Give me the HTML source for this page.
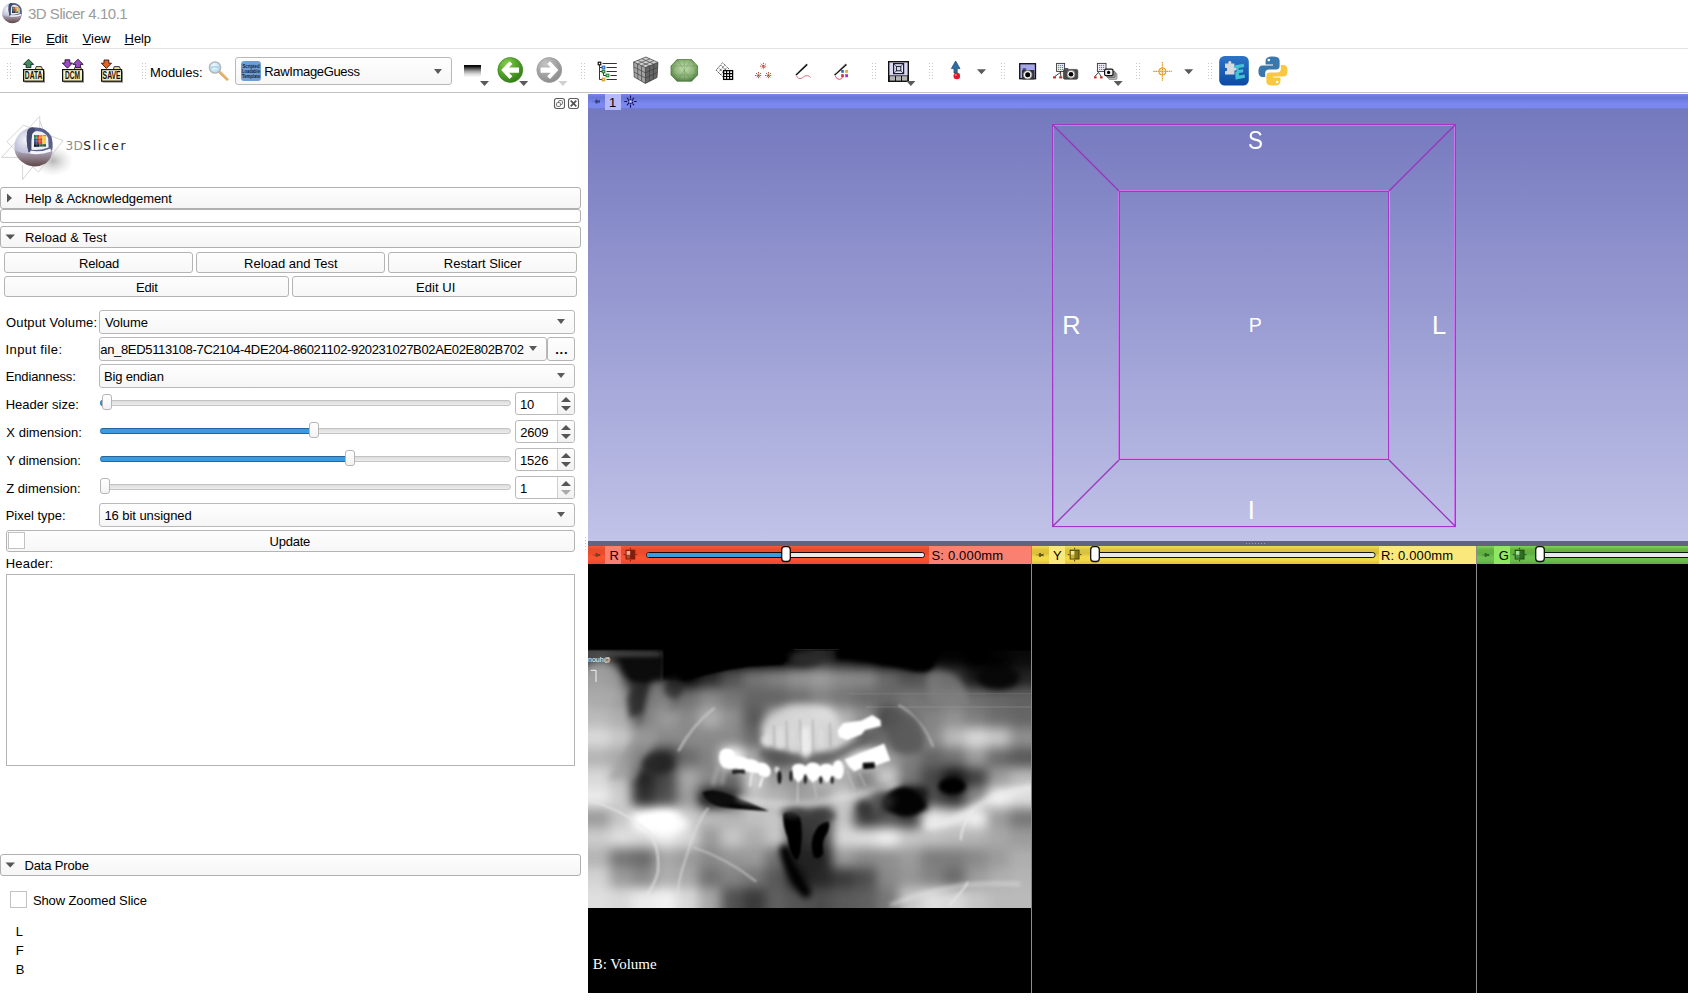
<!DOCTYPE html>
<html lang="en">
<head>
<meta charset="utf-8">
<title>3D Slicer 4.10.1</title>
<style>
html,body{margin:0;padding:0;}
body{width:1688px;height:1003px;overflow:hidden;background:#fff;position:relative;
  font-family:"Liberation Sans",sans-serif;font-size:13px;color:#000;line-height:16px;}
.a{position:absolute;white-space:nowrap;}
.hl{position:absolute;height:1px;background:#c4c4c4;}
.btn{position:absolute;box-sizing:border-box;border:1px solid #b4b4b4;border-radius:3px;
  background:linear-gradient(#fdfdfd,#f7f7f7);text-align:center;line-height:20px;}
.cb{position:absolute;box-sizing:border-box;border:1px solid #b9b9b9;border-radius:3px;
  background:linear-gradient(#fefefe,#f6f6f6);line-height:21px;padding-left:4px;}
.cb i,.dd{position:absolute;width:0;height:0;border-left:4.5px solid transparent;border-right:4.5px solid transparent;border-top:5px solid #5a5a5a;}
.col{position:absolute;box-sizing:border-box;border:1px solid #b0b0b0;border-radius:3px;
  background:linear-gradient(#fefefe,#f5f5f5);line-height:20px;}
.col span{position:absolute;left:24px;top:0;}
.sp{position:absolute;box-sizing:border-box;border:1px solid #b9b9b9;border-radius:3px;background:#fff;line-height:22px;padding-left:5px;}
.sp b{position:absolute;right:0;top:0;width:16px;height:21px;border-left:1px solid #cfcfcf;background:linear-gradient(#fcfcfc,#f2f2f2);border-radius:0 2px 2px 0;}
.sp b:before{content:"";position:absolute;left:3px;top:4px;border-left:5px solid transparent;border-right:5px solid transparent;border-bottom:5px solid #555;}
.sp b:after{content:"";position:absolute;left:3px;top:13px;border-left:5px solid transparent;border-right:5px solid transparent;border-top:5px solid #555;}
.sp.min b:after{border-top-color:#aaa;}
.trk{position:absolute;height:6px;box-sizing:border-box;border:1px solid #c3c3c3;border-radius:3px;background:linear-gradient(#dcdcdc,#ededed);}
.fill{position:absolute;height:6px;box-sizing:border-box;border:1px solid #23659c;border-left-color:#2f87c9;border-radius:3px;background:#3c9ade;}
.hnd{position:absolute;width:10px;height:16px;box-sizing:border-box;border:1px solid #b5b5b5;border-radius:3px;background:linear-gradient(#ffffff,#f3f3f3);}
.grip{position:absolute;width:5px;height:17px;background-image:radial-gradient(circle,#c9c9c9 0.8px,transparent 1px);background-size:3px 3px;}
.lbl{position:absolute;left:6px;white-space:nowrap;}
u{text-decoration:underline;text-underline-offset:1px;}
</style>
</head>
<body>
<!-- title bar -->
<svg class="a" style="left:0;top:0" width="26" height="26" viewBox="0 0 26 26"><use href="#sph" transform="translate(11.9 12.9) scale(0.516) translate(-33.4 -146.6)"/></svg>
<!-- menu bar -->
<div class="hl" style="left:0;top:48px;width:1688px;background:#e3e3e3;"></div>
<!-- toolbar -->
<div class="hl" style="left:0;top:92px;width:1688px;background:#c2c2c2;"></div>
<div class="grip" style="left:6px;top:62px;"></div>
<div class="grip" style="left:141px;top:62px;"></div>
<div class="grip" style="left:580px;top:62px;"></div>
<div class="grip" style="left:871px;top:62px;"></div>
<div class="grip" style="left:928px;top:62px;"></div>
<div class="grip" style="left:1000px;top:62px;"></div>
<div class="grip" style="left:1135px;top:62px;"></div>
<div class="grip" style="left:1207px;top:62px;"></div>
<div class="cb" style="left:235px;top:57px;width:217px;height:28px;line-height:26px;padding-left:28px;"><i style="right:9px;top:11px;"></i></div>
<!-- toolbar icons -->
<svg class="a" style="left:0;top:50px" width="1300" height="42" viewBox="0 50 1300 42" font-family="'Liberation Sans',sans-serif">
<defs>
  <linearGradient id="fold" x1="0" y1="0" x2="0" y2="1"><stop offset="0" stop-color="#fffbe0"/><stop offset="1" stop-color="#f3e6a4"/></linearGradient>
  <linearGradient id="gbar" x1="0" y1="0" x2="0" y2="1"><stop offset="0" stop-color="#000"/><stop offset="0.12" stop-color="#111"/><stop offset="0.3" stop-color="#555"/><stop offset="0.55" stop-color="#aaa"/><stop offset="0.8" stop-color="#e2e2e2"/><stop offset="1" stop-color="#fafafa"/></linearGradient>
  <radialGradient id="ggrn" cx="0.35" cy="0.25" r="0.9"><stop offset="0" stop-color="#86cc4a"/><stop offset="0.55" stop-color="#4c9c26"/><stop offset="1" stop-color="#2a6e14"/></radialGradient>
  <radialGradient id="ggry" cx="0.35" cy="0.25" r="0.9"><stop offset="0" stop-color="#c4c4c4"/><stop offset="0.6" stop-color="#9c9c9c"/><stop offset="1" stop-color="#848484"/></radialGradient>
  <linearGradient id="gext" x1="0" y1="0" x2="0" y2="1"><stop offset="0" stop-color="#2d74c6"/><stop offset="1" stop-color="#0b4aa6"/></linearGradient>
  <linearGradient id="gcube" x1="0" y1="0" x2="1" y2="1"><stop offset="0" stop-color="#bdbdbd"/><stop offset="1" stop-color="#3a3a3a"/></linearGradient>
  <radialGradient id="ggem" cx="0.5" cy="0.4" r="0.7"><stop offset="0" stop-color="#c4e0b0"/><stop offset="0.6" stop-color="#86ae72"/><stop offset="1" stop-color="#3d6a30"/></radialGradient>
  <radialGradient id="glens" cx="0.4" cy="0.35" r="0.7"><stop offset="0" stop-color="#f4fbff"/><stop offset="1" stop-color="#a8d8ee"/></radialGradient>
  <filter id="tsh" x="-20%" y="-20%" width="150%" height="150%"><feGaussianBlur stdDeviation="0.7"/></filter>
  <g id="folder">
    <rect x="1.6" y="12.2" width="20.4" height="11.6" fill="#555" opacity="0.55" filter="url(#tsh)"/>
    <path d="M12.3 10.5 L13.2 7.6 L18.4 7.6 L19.6 10.5 Z" fill="#eadf8e" stroke="#222" stroke-width="0.9"/>
    <rect x="0.6" y="10.6" width="20" height="11.6" fill="url(#fold)" stroke="#111" stroke-width="1.2"/>
  </g>
  <path id="dda" d="M0 0 L9 0 L4.5 5 Z"/>
</defs>
<!-- DATA -->
<g transform="translate(23 59)">
  <use href="#folder"/>
  <path d="M5.5 0.2 L10.6 5.4 L7.9 5.4 L7.9 8.6 L3.1 8.6 L3.1 5.4 L0.4 5.4 Z" fill="#3d8a5e" stroke="#10251a" stroke-width="0.9"/>
  <text x="10.6" y="20.4" font-size="10.6" font-weight="bold" text-anchor="middle" textLength="17.6" lengthAdjust="spacingAndGlyphs" fill="#111">DATA</text>
</g>
<!-- DCM -->
<g transform="translate(62 59)">
  <use href="#folder"/>
  <path d="M5.4 9.2 L0.3 4 L3 4 L3 0.8 L7.8 0.8 L7.8 4 L10.5 4 Z" fill="#9a4cc0" stroke="#2a1038" stroke-width="0.9"/>
  <path d="M16 0.2 L21.1 5.4 L18.4 5.4 L18.4 8.6 L13.6 8.6 L13.6 5.4 L10.9 5.4 Z" fill="#9a4cc0" stroke="#2a1038" stroke-width="0.9"/>
  <text x="10.6" y="20.4" font-size="10.6" font-weight="bold" text-anchor="middle" textLength="15" lengthAdjust="spacingAndGlyphs" fill="#111">DCM</text>
</g>
<!-- SAVE -->
<g transform="translate(101 59)">
  <use href="#folder"/>
  <path d="M5.4 9.4 L0.3 4.2 L3 4.2 L3 1 L7.8 1 L7.8 4.2 L10.5 4.2 Z" fill="#e0652a" stroke="#3a1404" stroke-width="0.9"/>
  <text x="10.6" y="20.4" font-size="10.6" font-weight="bold" text-anchor="middle" textLength="18" lengthAdjust="spacingAndGlyphs" fill="#111">SAVE</text>
</g>
<!-- magnifier -->
<g>
  <path d="M219.5 71.8 L227.4 79.4" stroke="#e7b368" stroke-width="2.6" stroke-linecap="round"/>
  <path d="M219.5 71.8 L227.4 79.4" stroke="#c9903c" stroke-width="0.6" stroke-linecap="round" transform="translate(-0.7 0.8)"/>
  <circle cx="215" cy="67.5" r="5.6" fill="url(#glens)" stroke="#b3b7bb" stroke-width="1.5"/>
  <path d="M210.8 68 Q214 65.6 219.2 67.6" stroke="#8ec6e2" stroke-width="1.2" fill="none" opacity="0.8"/>
</g>
<!-- module icon inside combo -->
<g>
  <rect x="241" y="61" width="20" height="20" rx="3.5" fill="#79a6dc"/>
  <rect x="241" y="61" width="20" height="20" rx="3.5" fill="#5e8cc8" opacity="0.35"/>
  <g font-size="4.6" font-weight="bold" fill="#0d2140" text-anchor="middle">
    <text x="251" y="67.6" textLength="17" lengthAdjust="spacingAndGlyphs">Scripted</text>
    <text x="251" y="72.6" textLength="18" lengthAdjust="spacingAndGlyphs">Loadable</text>
    <text x="251" y="77.6" textLength="18" lengthAdjust="spacingAndGlyphs">Template</text>
  </g>
</g>
<!-- gradient bar / history -->
<rect x="464" y="65" width="17" height="12" fill="url(#gbar)"/>
<use href="#dda" x="480" y="81" fill="#5a5a5a"/>
<!-- back (green) -->
<circle cx="510.3" cy="70" r="12.4" fill="url(#ggrn)" stroke="#3a8a1c" stroke-width="0.8"/>
<path d="M501.2 70 L509.6 61.2 L512.4 64 L509 67.4 L519 67.4 L519 72.8 L509 72.8 L512.4 76.2 L509.6 79 Z" fill="#fff"/>
<use href="#dda" x="519.2" y="81" fill="#5a5a5a"/>
<!-- forward (gray) -->
<circle cx="549.3" cy="70" r="12.4" fill="url(#ggry)" stroke="#9a9a9a" stroke-width="0.8"/>
<path d="M558.4 70 L550 61.2 L547.2 64 L550.6 67.4 L540.6 67.4 L540.6 72.8 L550.6 72.8 L547.2 76.2 L550 79 Z" fill="#fff"/>
<use href="#dda" x="558.4" y="81" fill="#d0d0d0"/>
<!-- tree -->
<g fill="none" stroke="#333" stroke-width="1">
  <path d="M599.5 65 L599.5 79.5 L602 79.5 M599.5 67.5 L602 67.5 M603.5 73 L603.5 75.5 L606 75.5 M599.5 71.5 L602 71.5"/>
  <path d="M602.5 63.5 L616.8 63.5 M606.5 67.5 L616.8 67.5 M606.5 71.5 L616.8 71.5 M610.5 75.5 L616.8 75.5 M606.5 79.5 L616.8 79.5"/>
  <rect x="598.2" y="62.2" width="2.6" height="2.6" stroke="#000" stroke-width="1.1" fill="#fff"/>
  <rect x="602.2" y="66.2" width="2.6" height="2.6" stroke="#2a6cc4" stroke-width="1.1" fill="#9ec4f2"/>
  <rect x="602.2" y="70.2" width="2.6" height="2.6" stroke="#1e7a2e" stroke-width="1.1" fill="#8fd49a"/>
  <rect x="606.2" y="74.2" width="2.6" height="2.6" stroke="#1e8a2e" stroke-width="1.1" fill="#9ee0a4"/>
  <rect x="602.2" y="78.2" width="2.6" height="2.6" stroke="#d69a2a" stroke-width="1.1" fill="#f8d890"/>
</g>
<!-- cube -->
<g>
  <path d="M633.6 62 L646 57 L658 62.4 L657 77.6 L645.4 83.4 L634.2 77 Z" fill="#777" />
  <path d="M633.6 62 L646 57 L658 62.4 L645.4 67.6 Z" fill="#cfcfcf"/>
  <path d="M633.6 62 L645.4 67.6 L645.4 83.4 L634.2 77 Z" fill="#a4a4a4"/>
  <path d="M645.4 67.6 L658 62.4 L657 77.6 L645.4 83.4 Z" fill="#666"/>
  <g stroke="#3a3a3a" stroke-width="0.8" fill="none" opacity="0.8">
    <path d="M633.6 62 L646 57 L658 62.4 L657 77.6 L645.4 83.4 L634.2 77 Z M633.6 62 L645.4 67.6 L658 62.4 M645.4 67.6 L645.4 83.4"/>
    <path d="M637.6 60.4 L649.6 65.8 L649.4 81.4 M641.8 58.7 L653.8 64.1 L653.2 79.5 M637.5 63.9 L637.9 79.1 M641.4 65.7 L641.7 81.3 M633.8 67 L645.4 72.8 L657.6 67.4 M634 72 L645.4 78 L657.3 72.6 M641.6 65.8 L654 60.6 M637.6 63.9 L650 58.8"/>
  </g>
</g>
<!-- gem -->
<g>
  <path d="M677 59.6 L691.6 59.6 L697.6 66 L697.6 75 L691.6 81.2 L677 81.2 L671 75 L671 66 Z" fill="url(#ggem)" stroke="#4c7a3c" stroke-width="0.8"/>
  <path d="M671 66 L697.6 66 M671 75 L697.6 75 M677 59.6 L691.6 81.2 M691.6 59.6 L677 81.2 M684.3 59.6 L684.3 81.2 M677 59.6 L671 75 M691.6 59.6 L697.6 75 M671 66 L677 81.2 M697.6 66 L691.6 81.2" stroke="#5c8a4a" stroke-width="0.5" fill="none" opacity="0.7"/>
</g>
<!-- grid / transforms -->
<g fill="none" stroke="#000">
  <path d="M716.2 70.2 L722.6 62.6 L729 69 M718.4 72.6 L725 65 M720.6 74.8 L727 67.2 M718.4 67.6 L724.8 74 M720.6 65 L727 71.4 M716.2 70.2 L722.6 76.6" stroke-width="0.8" stroke-dasharray="1 1"/>
  <rect x="723.6" y="70.6" width="9" height="8.8" stroke-width="1.3" fill="#fff"/>
  <path d="M726.6 70.6 L726.6 79.4 M729.6 70.6 L729.6 79.4 M723.6 73.6 L732.6 73.6 M723.6 76.5 L732.6 76.5" stroke-width="1.2"/>
</g>
<!-- fiducials -->
<g stroke="#b4301c" stroke-width="0.9" stroke-dasharray="1.4 0.8" fill="none">
  <g id="ast"><path d="M763.4 62.8 L763.4 69.6 M760 66.2 L766.8 66.2 M761 63.8 L765.8 68.6 M765.8 63.8 L761 68.6"/></g>
  <use href="#ast" x="-4.9" y="9.3"/>
  <use href="#ast" x="5.1" y="9.3"/>
</g>
<!-- ruler -->
<g fill="none">
  <path d="M796 75 L807.2 64.4" stroke="#111" stroke-width="1.6"/>
  <path d="M796.4 73.4 L806.4 63.8" stroke="#b0b0b0" stroke-width="1"/>
  <path d="M796 75.6 Q798.6 80 801.6 78.4 Q805 75 807.6 75.6 Q809.6 76 810.6 77.6" stroke="#c4506a" stroke-width="0.8"/>
</g>
<!-- paint -->
<g fill="none">
  <rect x="841.2" y="70" width="2.6" height="2.8" fill="#2a6cc0"/>
  <rect x="845.2" y="70" width="2.8" height="2.8" fill="#e6b030"/>
  <rect x="841.2" y="74.2" width="2.6" height="3" fill="#d8283c"/>
  <rect x="845.2" y="74.2" width="2.8" height="3" fill="#b030c8"/>
  <path d="M834.6 75 L846.4 64.4" stroke="#111" stroke-width="1.6"/>
  <path d="M835.4 73.4 L845.6 63.8" stroke="#b8b8b8" stroke-width="1"/>
  <path d="M835 75.6 Q836.6 79.6 839.6 79.4 Q842 79 842.6 77" stroke="#d03040" stroke-width="0.8"/>
</g>
<!-- layout -->
<g>
  <rect x="888.7" y="61.7" width="19.6" height="19.6" fill="#d9d9f6" stroke="#111" stroke-width="1.4"/>
  <rect x="888.7" y="75.4" width="19.6" height="5.9" fill="#111"/>
  <rect x="889.8" y="76.2" width="5.2" height="4.4" fill="#b4b4b4"/>
  <rect x="896" y="76.2" width="5" height="4.4" fill="#b4b4b4"/>
  <rect x="902" y="76.2" width="5.2" height="4.4" fill="#b4b4b4"/>
  <rect x="893.6" y="63.6" width="10" height="10" fill="#e4e4fa" stroke="#1a1a2a" stroke-width="1.2"/>
  <rect x="896.4" y="66.4" width="4.4" height="4.4" fill="#d4d4f4" stroke="#1a1a2a" stroke-width="1"/>
  <path d="M893.6 63.6 L896.4 66.4 M903.6 63.6 L900.8 66.4 M893.6 73.6 L896.4 70.8 M903.6 73.6 L900.8 70.8" stroke="#1a1a2a" stroke-width="0.7"/>
  <use href="#dda" x="906.4" y="81" fill="#5a5a5a"/>
</g>
<!-- mouse mode -->
<g>
  <path d="M955.6 61 L960 68.6 L957.2 68.6 L957.2 73 L954 73 L954 68.6 L951.4 68.6 Z" fill="#2f6ea4" stroke="#1a4468" stroke-width="0.7"/>
  <circle cx="956.8" cy="76" r="3.3" fill="#e0182c"/>
  <circle cx="955.8" cy="75" r="1.1" fill="#f47a84"/>
  <use href="#dda" x="977" y="69.2" fill="#5a5a5a"/>
</g>
<!-- screenshot -->
<g id="cam1">
  <rect x="1019.7" y="63.7" width="15.8" height="15" fill="#a6a6ea" stroke="#111" stroke-width="1.3"/>
  <rect x="1022" y="70" width="12.4" height="9.6" rx="1" fill="#333"/>
  <rect x="1022.6" y="68.4" width="3.6" height="1.4" fill="#26366e"/>
  <circle cx="1027.7" cy="74.8" r="4.3" fill="#f2f2f2" stroke="#888" stroke-width="0.8"/>
  <circle cx="1027.7" cy="74.8" r="2.5" fill="#000"/>
</g>
<!-- scene view -->
<g>
  <rect x="1056.6" y="63.4" width="8" height="8" fill="#f4f4f8" stroke="#333" stroke-width="0.9"/>
  <path d="M1058 65.4 L1063.4 65.4 M1058 67.4 L1063.4 67.4 M1058 69.4 L1063.4 69.4" stroke="#4858b0" stroke-width="0.9" stroke-dasharray="1.2 0.8"/>
  <path d="M1060.6 71.4 L1060.6 72.6 M1060.6 72.4 L1054.6 76.6 M1060.6 72.4 L1060.8 76.6" stroke="#111" stroke-width="0.8" fill="none"/>
  <rect x="1053" y="76.4" width="3" height="2" fill="#c42a20"/>
  <rect x="1059.2" y="76.4" width="3" height="2" fill="#c42a20"/>
  <rect x="1063.4" y="69.4" width="14.4" height="9.8" rx="1.4" fill="#4a4a4a" stroke="#2a2a2a" stroke-width="0.6"/>
  <rect x="1064.6" y="68" width="3.6" height="1.6" fill="#555"/>
  <circle cx="1071" cy="74.2" r="4" fill="#f2f2f2" stroke="#777" stroke-width="0.8"/>
  <circle cx="1071" cy="74.2" r="2.3" fill="#000"/>
</g>
<!-- scene views list -->
<g>
  <rect x="1097.4" y="63.4" width="8.6" height="8" fill="#f4f4f8" stroke="#333" stroke-width="0.9"/>
  <path d="M1099 65.4 L1104.6 65.4 M1099 67.4 L1104.6 67.4 M1099 69.4 L1104.6 69.4" stroke="#4858b0" stroke-width="0.9" stroke-dasharray="1.2 0.8"/>
  <path d="M1098.4 72.4 L1094.8 76.6 M1098.4 72.4 L1101.4 76.6" stroke="#111" stroke-width="0.8" fill="none"/>
  <rect x="1094" y="76.4" width="2.6" height="2" fill="#c42a20"/>
  <rect x="1100" y="76.4" width="2.6" height="2" fill="#c42a20"/>
  <rect x="1108.6" y="73" width="8.4" height="6.4" rx="1.2" fill="#c4c4c4" stroke="#777" stroke-width="0.7"/>
  <rect x="1106.8" y="71.2" width="8.4" height="6.4" rx="1.2" fill="#9a9a9a" stroke="#555" stroke-width="0.7"/>
  <rect x="1104.6" y="69.2" width="8.4" height="6.4" rx="1.4" fill="#f0f0f0" stroke="#111" stroke-width="1.2"/>
  <circle cx="1108.6" cy="72.4" r="1.6" fill="#000"/>
  <use href="#dda" x="1113.6" y="81" fill="#5a5a5a"/>
</g>
<!-- crosshair -->
<g stroke="#e59a22" fill="none">
  <path d="M1153.2 71.4 L1171.8 71.4 M1162.4 62 L1162.4 80.8" stroke-width="1.2" stroke-dasharray="1.6 0.6"/>
  <circle cx="1162.4" cy="71.4" r="3.4" stroke-width="1.1"/>
  <path d="M1160 69 L1164.8 73.8 M1164.8 69 L1160 73.8" stroke-width="0.6" opacity="0.7"/>
  <use href="#dda" x="1184.2" y="69.2" fill="#5a5a5a" stroke="none"/>
</g>
<!-- extension manager -->
<g>
  <rect x="1219.2" y="56" width="29.6" height="29.6" rx="5.5" fill="url(#gext)"/>
  <path d="M1225 63.6 L1228.4 63.6 Q1227.8 61 1229.8 61 Q1231.8 61 1231.2 63.6 L1234.4 63.6 L1234.4 67.6 Q1236.8 67 1236.8 69 Q1236.8 71 1234.4 70.4 L1234.4 74.6 L1225 74.6 L1225 71 Q1227.2 71.6 1227.2 69.4 Q1227.2 67.4 1225 68 Z" fill="#d6d9de"/>
  <path d="M1234 65.6 L1243.8 63.8 L1244.2 67 L1238.6 68 L1238.8 70 L1243 69.2 L1243.4 72.2 L1239 73 L1239.2 75.6 L1244.6 74.6 L1245 77.8 L1235.6 79.6 L1235.2 72 Q1237.4 71.6 1237.2 69.4 Q1237 67.6 1234.4 68 Z" fill="#45c2d2"/>
</g>
<!-- python -->
<g>
  <path d="M1272.6 56.4 Q1265.6 56.4 1265.6 60.6 L1265.6 64.4 L1273 64.4 L1273 65.4 L1262.6 65.4 Q1258.4 65.4 1258.4 71.2 Q1258.4 77 1262.6 77 L1265.2 77 L1265.2 73 Q1265.2 69.4 1269.2 69.4 L1276.2 69.4 Q1279.6 69.4 1279.6 66 L1279.6 60.6 Q1279.6 56.4 1272.6 56.4 Z" fill="#3a78ac"/>
  <circle cx="1268.8" cy="60" r="1.3" fill="#fff"/>
  <path d="M1273.4 85.6 Q1280.4 85.6 1280.4 81.4 L1280.4 77.6 L1273 77.6 L1273 76.6 L1283.4 76.6 Q1287.6 76.6 1287.6 70.8 Q1287.6 65 1283.4 65 L1280.8 65 L1280.8 69 Q1280.8 72.6 1276.8 72.6 L1269.8 72.6 Q1266.4 72.6 1266.4 76 L1266.4 81.4 Q1266.4 85.6 1273.4 85.6 Z" fill="#f8c840"/>
  <circle cx="1277.2" cy="82" r="1.3" fill="#fff"/>
</g>
</svg>
<!-- dock title buttons -->
<svg class="a" style="left:550px;top:96px" width="32" height="16" viewBox="550 96 32 16">
  <rect x="554.5" y="98.5" width="10" height="10" rx="2.2" fill="#fff" stroke="#5a5a5a" stroke-width="1.1"/>
  <rect x="558.6" y="100.6" width="3.8" height="3.8" rx="0.8" fill="#fff" stroke="#666" stroke-width="1"/>
  <rect x="556.6" y="102.6" width="3.8" height="3.8" rx="0.8" fill="#fff" stroke="#666" stroke-width="1"/>
  <rect x="568.5" y="98.5" width="10" height="10" rx="2.2" fill="#fff" stroke="#5a5a5a" stroke-width="1.1"/>
  <path d="M570.7 100.7 L576.3 106.3 M576.3 100.7 L570.7 106.3" stroke="#555" stroke-width="1.7" fill="none"/>
</svg>
<!-- logo -->
<svg class="a" style="left:0px;top:112px" width="140" height="72" viewBox="0 112 140 72">
  <defs>
    <radialGradient id="lg1" cx="0.3" cy="0.32" r="0.8"><stop offset="0" stop-color="#f4f5fb"/><stop offset="0.45" stop-color="#b9bcd4"/><stop offset="0.8" stop-color="#8a8098"/><stop offset="1" stop-color="#5a4448"/></radialGradient>
    <radialGradient id="lg2" cx="0.5" cy="0.5" r="0.5"><stop offset="0" stop-color="#666" stop-opacity="0.6"/><stop offset="0.6" stop-color="#999" stop-opacity="0.25"/><stop offset="1" stop-color="#aaa" stop-opacity="0"/></radialGradient>
    <linearGradient id="lg3" x1="0" y1="0" x2="0" y2="1"><stop offset="0" stop-color="#b4b2c4"/><stop offset="0.5" stop-color="#8c7c88"/><stop offset="1" stop-color="#5e4646"/></linearGradient>
  </defs>
  <ellipse cx="53" cy="161" rx="20" ry="15" fill="url(#lg2)" opacity="0.8"/>
  <g fill="none" stroke="#c4c4c8" stroke-width="0.7">
    <path d="M39.6 116.4 L1.6 157.4 L54.4 157.6 L39.8 121"/>
    <path d="M6.8 141.6 L23.4 125.2 L63 140.6 L38.4 172.2 Z"/>
    <path d="M39.8 116.4 L39.8 150 M22.6 165 L22.6 179.6 L46 150"/>
  </g>
  <g id="sph">
  <circle cx="33.4" cy="146.6" r="19" fill="url(#lg1)"/>
  <path d="M14.6 150 Q30 158 52.2 149.4 Q52.6 158 46 163.2 Q33 170.4 21.6 161.6 Q15.6 156.6 14.6 150 Z" fill="url(#lg3)"/>
  <path d="M27.4 131 Q30 126.6 34.6 127.6 Q46 127 51.6 137 Q53.4 143.6 52.2 149.4 Q42 153.4 28.6 152 Q25.6 141 27.4 131 Z" fill="#59618a"/>
  <path d="M27.4 131 Q29.6 127 33 127.4 Q35.4 128 35 131 Q32.4 141 32 151.8 L28.6 152 Q25.6 141 27.4 131 Z" fill="#444a6c"/>
  <path d="M32.2 134 Q34.4 130.6 38 131.2 Q45.6 131.6 48.2 138 L48.6 147.4 Q40 150.6 31.4 149.8 Q31 141 32.2 134 Z" fill="#eef0f6"/>
  <path d="M30.4 150.6 Q40 152.8 50.6 148.4 L51 151.6 Q40 155.4 30 153.6 Z" fill="#f4f5fa"/>
  <g>
    <rect x="34" y="135" width="12" height="11.6" fill="#2c5a3c"/>
    <rect x="34" y="135" width="3.6" height="11.6" fill="#2a4a8a"/>
    <rect x="34.2" y="135" width="4" height="4" fill="#2e8a4a"/>
    <rect x="38" y="135.6" width="4.4" height="8" fill="#e03a22"/>
    <rect x="39" y="135" width="4" height="3.4" fill="#f08a2a"/>
    <rect x="42.2" y="135.4" width="3.8" height="8.6" fill="#f2cc3a"/>
    <rect x="34" y="143.4" width="5" height="3.2" fill="#121a2a"/>
    <path d="M36.8 135 L36.8 146.6 M39.8 135 L39.8 146.6 M42.8 135 L42.8 146.6 M34 138 L46 138 M34 141 L46 141 M34 144 L46 144" stroke="#f4f4f4" stroke-width="0.4" opacity="0.7" fill="none"/>
  </g>
  </g>
  <text x="65.6" y="149.9" font-family="'DejaVu Sans','Liberation Sans',sans-serif" font-size="12.2" fill="#8e8e8e" letter-spacing="0.2">3D<tspan fill="#262626" letter-spacing="1.75">Slicer</tspan></text>
</svg>
<!-- collapsible buttons -->
<div class="col" style="left:0px;top:187px;width:581px;height:22px;"><svg class="a" style="left:5px;top:5px" width="8" height="10"><path d="M1 0.5 L6 5 L1 9.5 Z" fill="#555"/></svg></div>
<div class="col" style="left:0px;top:209px;width:581px;height:14px;background:#fff;"></div>
<div class="col" style="left:0px;top:226px;width:581px;height:22px;"><svg class="a" style="left:4px;top:7px" width="11" height="7"><path d="M0.5 0.5 L10 0.5 L5.25 5.5 Z" fill="#555"/></svg></div>
<!-- buttons -->
<div class="btn" style="left:4px;top:252px;width:189px;height:21px;"></div>
<div class="btn" style="left:196px;top:252px;width:189px;height:21px;"></div>
<div class="btn" style="left:388px;top:252px;width:189px;height:21px;"></div>
<div class="btn" style="left:4px;top:276px;width:285px;height:21px;"></div>
<div class="btn" style="left:292px;top:276px;width:285px;height:21px;"></div>
<!-- form -->
<div class="cb" style="left:99px;top:310px;width:476px;height:24px;"><i style="right:9px;top:8px;"></i></div>
<div class="cb" style="left:99px;top:337px;width:448px;height:24px;padding-left:1px;letter-spacing:-0.36px;"><i style="right:9px;top:8px;"></i></div>
<div class="btn" style="left:547px;top:337px;width:28px;height:24px;line-height:19px;"></div>
<div class="cb" style="left:99px;top:364px;width:476px;height:24px;"><i style="right:9px;top:8px;"></i></div>

<div class="trk" style="left:100px;top:400px;width:411px;"></div>
<div class="fill" style="left:100px;top:400px;width:6px;"></div>
<div class="hnd" style="left:102px;top:394px;"></div>
<div class="sp" style="left:515px;top:392px;width:60px;height:23px;"><b></b></div>

<div class="trk" style="left:100px;top:428px;width:411px;"></div>
<div class="fill" style="left:100px;top:428px;width:214px;"></div>
<div class="hnd" style="left:309px;top:422px;"></div>
<div class="sp" style="left:515px;top:420px;width:60px;height:23px;"><b></b></div>

<div class="trk" style="left:100px;top:456px;width:411px;"></div>
<div class="fill" style="left:100px;top:456px;width:250px;"></div>
<div class="hnd" style="left:345px;top:450px;"></div>
<div class="sp" style="left:515px;top:448px;width:60px;height:23px;"><b></b></div>

<div class="trk" style="left:100px;top:484px;width:411px;"></div>
<div class="hnd" style="left:100px;top:478px;"></div>
<div class="sp min" style="left:515px;top:476px;width:60px;height:23px;"><b></b></div>

<div class="cb" style="left:99px;top:503px;width:476px;height:24px;"><i style="right:9px;top:8px;"></i></div>

<div class="btn" style="left:6px;top:530px;width:569px;height:22px;"></div>
<div class="a" style="left:8px;top:532px;width:17px;height:17px;box-sizing:border-box;border:1px solid #c2c2c2;border-radius:0;background:#fff;"></div>
<div class="a" style="left:6px;top:574px;width:569px;height:192px;box-sizing:border-box;border:1px solid #b4b4b4;background:#fff;"></div>

<!-- data probe -->
<div class="col" style="left:0px;top:854px;width:581px;height:22px;"><svg class="a" style="left:4px;top:7px" width="11" height="7"><path d="M0.5 0.5 L10 0.5 L5.25 5.5 Z" fill="#555"/></svg></div>
<div class="a" style="left:10px;top:891px;width:17px;height:17px;box-sizing:border-box;border:1px solid #c2c2c2;border-radius:0;background:#fff;"></div>
<!-- splitter dots -->
<div class="a" style="left:584px;top:536px;width:3px;height:15px;background-image:radial-gradient(circle,#c4c4c4 0.7px,transparent 0.9px);background-size:3px 3px;"></div>
<!-- 3D view -->
<div class="a" style="left:588px;top:94px;width:1100px;height:15px;background:linear-gradient(#7784ea,#6976d7 24%,#7a88f1 66%,#7b87eb 90%,#6d77c9);"></div>
<div class="a" style="left:588px;top:109px;width:1100px;height:432px;background:linear-gradient(#7478be,#c1c3e8);"></div>
<div class="a" style="left:605px;top:94px;width:16px;height:16px;background:#b4bafc;"></div>
<svg class="a" style="left:588px;top:94px" width="1100" height="447" viewBox="588 94 1100 447">
  <path transform="translate(592.4 98.8)" d="M0 2.4 L2.6 2.4 L3.4 0.6 L5 0.6 L5 1.6 L7.2 1.6 L7.6 0.8 L7.6 4.6 L7.2 3.6 L5 3.6 L5 4.6 L3.4 4.6 L2.6 2.8 L0 2.8 Z" fill="#30346e" opacity="0.85"/>
  <g stroke="#14145e" stroke-width="1.1" fill="none">
    <path d="M630.5 95.4 L630.5 98.4 M630.5 104.6 L630.5 107.8 M624.2 101.5 L627.2 101.5 M633.8 101.5 L636.8 101.5"/>
    <rect x="628.5" y="99.5" width="4" height="4" stroke-dasharray="1 0.6"/>
    <path d="M627.2 98.2 L628 99 M633 99 L633.8 98.2 M627.2 104.8 L628 104 M633 104 L633.8 104.8" stroke-linecap="round"/>
  </g>
  <rect x="629.8" y="100.8" width="1.4" height="1.4" fill="#e8e8ff"/>
  <g fill="none" stroke-width="1">
    <g stroke="#cf74ee">
      <path d="M1053.5 125 L1053.5 527 M1454.5 125 L1454.5 527 M1053 125.5 L1455 125.5"/>
      <path d="M1052 527.5 L1456 527.5" stroke="#e79af6"/>
      <path d="M1118.5 190 L1118.5 459 M1118 190.5 L1389 190.5"/>
      <path d="M1389.5 191 L1389.5 460 M1119 458.5 L1389 458.5" stroke="#e08cf4"/>
    </g>
    <g stroke="#a437c6">
      <rect x="1052.5" y="124.5" width="403" height="402"/>
      <rect x="1119.5" y="191.5" width="269" height="268"/>
    </g>
    <path d="M1053 125 L1119 191 M1455 125 L1389 191 M1053 526 L1119 460 M1455 526 L1389 460" stroke="#9a32bc" stroke-width="1.3"/>
  </g>
</svg>
<div class="a" style="left:588px;top:541px;width:1100px;height:5px;background:#61637f;"></div>
<!-- slice views -->
<div class="a" style="left:588px;top:564px;width:1100px;height:429px;background:#000;"></div>
<div class="a" style="left:1031px;top:546px;width:1px;height:447px;background:#8c8c8c;"></div>
<div class="a" style="left:1476px;top:546px;width:1px;height:447px;background:#8c8c8c;"></div>
<!-- red -->
<div class="a" style="left:588px;top:546px;width:443px;height:18px;background:linear-gradient(#f25a3c,#ea4a2e 18%,#ec4a2c 40%,#f8542f 62%,#f65230 80%,#e24c34);"></div>
<div class="a" style="left:605px;top:546px;width:16px;height:18px;background:#fa8072;"></div>
<div class="a" style="left:929px;top:546px;width:102px;height:18px;background:#fa8072;"></div>
<!-- yellow -->
<div class="a" style="left:1032px;top:546px;width:444px;height:18px;background:linear-gradient(#f0dc58,#e0c640 18%,#d9bf3b 40%,#f3da48 62%,#f1d746 80%,#dcc044);"></div>
<div class="a" style="left:1049px;top:546px;width:16px;height:18px;background:#fbe87c;"></div>
<div class="a" style="left:1379px;top:546px;width:97px;height:18px;background:#fbe87c;"></div>
<!-- green -->
<div class="a" style="left:1477px;top:546px;width:211px;height:18px;background:linear-gradient(#7cd45c,#64b446 18%,#5eae42 40%,#6ec24e 62%,#6cbe4c 80%,#5ea844);"></div>
<div class="a" style="left:1494px;top:546px;width:16px;height:18px;background:#8ee864;"></div>
<svg class="a" style="left:588px;top:541px" width="1100" height="24" viewBox="588 541 1100 24">
  <defs>
    <g id="pin"><path d="M0 2.4 L2.6 2.4 L3.4 0.6 L5 0.6 L5 1.6 L7.2 1.6 L7.6 0.8 L7.6 4.6 L7.2 3.6 L5 3.6 L5 4.6 L3.4 4.6 L2.6 2.8 L0 2.8 Z"/></g>
    <g id="slic">
      <rect x="0" y="0" width="8.8" height="8.8" />
      <path d="M4.4 -2 L4.4 -1.2 M4.4 10 L4.4 10.8 M-2 4.4 L-1.2 4.4 M10 4.4 L10.8 4.4" stroke-width="1" fill="none" stroke-linecap="round"/>
    </g>
  </defs>
  <!-- splitter grip -->
  <g fill="#9a9ab4"><rect x="1246" y="543" width="1" height="1"/><rect x="1249" y="543" width="1" height="1"/><rect x="1252" y="543" width="1" height="1"/><rect x="1255" y="543" width="1" height="1"/><rect x="1258" y="543" width="1" height="1"/><rect x="1261" y="543" width="1" height="1"/><rect x="1264" y="543" width="1" height="1"/></g>
  <!-- red -->
  <use href="#pin" x="592.6" y="552.4" fill="#6a3a22" opacity="0.85"/>
  <g transform="translate(626 550.2)"><use href="#slic" fill="#7a1f0c" stroke="#8a1a08"/><rect x="0.6" y="0.8" width="3.6" height="3.8" fill="#f4a898"/><rect x="0.6" y="4.8" width="3.6" height="3.6" fill="#b04430"/></g>
  <rect x="646.5" y="552.5" width="278" height="5" rx="2.2" fill="#e9e9e9" stroke="#1a0806" stroke-width="1"/>
  <rect x="647" y="553" width="138" height="4" rx="1.8" fill="#3c9ade"/>
  <rect x="781.7" y="546.7" width="8.6" height="14.8" rx="3" fill="#fff" stroke="#1a0806" stroke-width="1.3"/>
  <!-- yellow -->
  <use href="#pin" x="1036" y="552.4" fill="#4a4418" opacity="0.85"/>
  <g transform="translate(1070.2 550.2)"><use href="#slic" fill="#8a7a10" stroke="#4a4008"/><rect x="0.6" y="0.8" width="3.6" height="3.8" fill="#f2e698"/><rect x="0.6" y="4.8" width="3.6" height="3.6" fill="#c4b040"/></g>
  <rect x="1095" y="552.5" width="280" height="5" rx="2.2" fill="#e9e9e9" stroke="#14120a" stroke-width="1"/>
  <rect x="1090.7" y="546.7" width="8.6" height="14.8" rx="3" fill="#fff" stroke="#14120a" stroke-width="1.3"/>
  <!-- green -->
  <use href="#pin" x="1481.6" y="552.4" fill="#2a5a1e" opacity="0.85"/>
  <g transform="translate(1515.2 550.2)"><use href="#slic" fill="#2e6e22" stroke="#1a4a12"/><rect x="0.6" y="0.8" width="3.6" height="3.8" fill="#a8e090"/><rect x="0.6" y="4.8" width="3.6" height="3.6" fill="#4c9438"/></g>
  <rect x="1540" y="552.5" width="160" height="5" rx="2.2" fill="#e9e9e9" stroke="#0a1406" stroke-width="1"/>
  <rect x="1535.7" y="546.7" width="8.6" height="14.8" rx="3" fill="#fff" stroke="#0a1406" stroke-width="1.3"/>
</svg>
<!-- x-ray -->
<svg class="a" style="left:588px;top:648px" width="443" height="260" viewBox="588 648 443 260">
<defs>
<filter id="xg" color-interpolation-filters="sRGB" filterUnits="userSpaceOnUse" x="540" y="600" width="540" height="360"><feGaussianBlur stdDeviation="6"/><feComponentTransfer><feFuncR type="linear" slope="1.22" intercept="-0.105"/><feFuncG type="linear" slope="1.22" intercept="-0.105"/><feFuncB type="linear" slope="1.22" intercept="-0.105"/></feComponentTransfer></filter>
<filter id="xb0" color-interpolation-filters="sRGB" filterUnits="userSpaceOnUse" x="560" y="620" width="500" height="320"><feGaussianBlur stdDeviation="0.6"/></filter>
<filter id="xb1" color-interpolation-filters="sRGB" filterUnits="userSpaceOnUse" x="560" y="620" width="500" height="320"><feGaussianBlur stdDeviation="1"/></filter>
<filter id="xb2" color-interpolation-filters="sRGB" filterUnits="userSpaceOnUse" x="560" y="620" width="500" height="320"><feGaussianBlur stdDeviation="2"/></filter>
<filter id="xb3" color-interpolation-filters="sRGB" filterUnits="userSpaceOnUse" x="560" y="620" width="500" height="320"><feGaussianBlur stdDeviation="3"/></filter>
<filter id="xb4" color-interpolation-filters="sRGB" filterUnits="userSpaceOnUse" x="560" y="620" width="500" height="320"><feGaussianBlur stdDeviation="4"/></filter>
<filter id="xb6" color-interpolation-filters="sRGB" filterUnits="userSpaceOnUse" x="560" y="620" width="500" height="320"><feGaussianBlur stdDeviation="6"/></filter>
<filter id="xb9" color-interpolation-filters="sRGB" filterUnits="userSpaceOnUse" x="560" y="620" width="500" height="320"><feGaussianBlur stdDeviation="9"/></filter>
<clipPath id="xclip"><rect x="588" y="649" width="443" height="259"/></clipPath>
</defs>
<g clip-path="url(#xclip)">
<g filter="url(#xg)">
<rect x="565.5" y="627.7" width="22.8" height="20.6" fill="#464646"/>
<rect x="587.7" y="627.7" width="22.8" height="20.6" fill="#464646"/>
<rect x="609.9" y="627.7" width="22.8" height="20.6" fill="#2d2d2d"/>
<rect x="632.1" y="627.7" width="22.8" height="20.6" fill="#232323"/>
<rect x="654.3" y="627.7" width="22.8" height="20.6" fill="#141414"/>
<rect x="676.5" y="627.7" width="22.8" height="20.6" fill="#000000"/>
<rect x="698.7" y="627.7" width="22.8" height="20.6" fill="#050505"/>
<rect x="720.9" y="627.7" width="22.8" height="20.6" fill="#000000"/>
<rect x="743.1" y="627.7" width="22.8" height="20.6" fill="#000000"/>
<rect x="765.3" y="627.7" width="22.8" height="20.6" fill="#050505"/>
<rect x="787.5" y="627.7" width="22.8" height="20.6" fill="#191919"/>
<rect x="809.7" y="627.7" width="22.8" height="20.6" fill="#373737"/>
<rect x="831.9" y="627.7" width="22.8" height="20.6" fill="#282828"/>
<rect x="854.1" y="627.7" width="22.8" height="20.6" fill="#191919"/>
<rect x="876.3" y="627.7" width="22.8" height="20.6" fill="#050505"/>
<rect x="898.5" y="627.7" width="22.8" height="20.6" fill="#0c0c0c"/>
<rect x="920.7" y="627.7" width="22.8" height="20.6" fill="#191919"/>
<rect x="942.9" y="627.7" width="22.8" height="20.6" fill="#191919"/>
<rect x="965.1" y="627.7" width="22.8" height="20.6" fill="#141414"/>
<rect x="987.3" y="627.7" width="22.8" height="20.6" fill="#191919"/>
<rect x="1009.5" y="627.7" width="22.8" height="20.6" fill="#1e1e1e"/>
<rect x="1031.7" y="627.7" width="22.8" height="20.6" fill="#1e1e1e"/>
<rect x="565.5" y="647.7" width="22.8" height="20.6" fill="#464646"/>
<rect x="587.7" y="647.7" width="22.8" height="20.6" fill="#464646"/>
<rect x="609.9" y="647.7" width="22.8" height="20.6" fill="#2d2d2d"/>
<rect x="632.1" y="647.7" width="22.8" height="20.6" fill="#232323"/>
<rect x="654.3" y="647.7" width="22.8" height="20.6" fill="#141414"/>
<rect x="676.5" y="647.7" width="22.8" height="20.6" fill="#000000"/>
<rect x="698.7" y="647.7" width="22.8" height="20.6" fill="#050505"/>
<rect x="720.9" y="647.7" width="22.8" height="20.6" fill="#000000"/>
<rect x="743.1" y="647.7" width="22.8" height="20.6" fill="#000000"/>
<rect x="765.3" y="647.7" width="22.8" height="20.6" fill="#050505"/>
<rect x="787.5" y="647.7" width="22.8" height="20.6" fill="#191919"/>
<rect x="809.7" y="647.7" width="22.8" height="20.6" fill="#373737"/>
<rect x="831.9" y="647.7" width="22.8" height="20.6" fill="#282828"/>
<rect x="854.1" y="647.7" width="22.8" height="20.6" fill="#191919"/>
<rect x="876.3" y="647.7" width="22.8" height="20.6" fill="#050505"/>
<rect x="898.5" y="647.7" width="22.8" height="20.6" fill="#0c0c0c"/>
<rect x="920.7" y="647.7" width="22.8" height="20.6" fill="#191919"/>
<rect x="942.9" y="647.7" width="22.8" height="20.6" fill="#191919"/>
<rect x="965.1" y="647.7" width="22.8" height="20.6" fill="#141414"/>
<rect x="987.3" y="647.7" width="22.8" height="20.6" fill="#191919"/>
<rect x="1009.5" y="647.7" width="22.8" height="20.6" fill="#1e1e1e"/>
<rect x="1031.7" y="647.7" width="22.8" height="20.6" fill="#1e1e1e"/>
<rect x="565.5" y="667.7" width="22.8" height="20.6" fill="#787878"/>
<rect x="587.7" y="667.7" width="22.8" height="20.6" fill="#787878"/>
<rect x="609.9" y="667.7" width="22.8" height="20.6" fill="#505050"/>
<rect x="632.1" y="667.7" width="22.8" height="20.6" fill="#232323"/>
<rect x="654.3" y="667.7" width="22.8" height="20.6" fill="#282828"/>
<rect x="676.5" y="667.7" width="22.8" height="20.6" fill="#191919"/>
<rect x="698.7" y="667.7" width="22.8" height="20.6" fill="#373737"/>
<rect x="720.9" y="667.7" width="22.8" height="20.6" fill="#5a5a5a"/>
<rect x="743.1" y="667.7" width="22.8" height="20.6" fill="#767676"/>
<rect x="765.3" y="667.7" width="22.8" height="20.6" fill="#808080"/>
<rect x="787.5" y="667.7" width="22.8" height="20.6" fill="#8e8e8e"/>
<rect x="809.7" y="667.7" width="22.8" height="20.6" fill="#969696"/>
<rect x="831.9" y="667.7" width="22.8" height="20.6" fill="#888888"/>
<rect x="854.1" y="667.7" width="22.8" height="20.6" fill="#868686"/>
<rect x="876.3" y="667.7" width="22.8" height="20.6" fill="#6c6c6c"/>
<rect x="898.5" y="667.7" width="22.8" height="20.6" fill="#585858"/>
<rect x="920.7" y="667.7" width="22.8" height="20.6" fill="#5f5f5f"/>
<rect x="942.9" y="667.7" width="22.8" height="20.6" fill="#464646"/>
<rect x="965.1" y="667.7" width="22.8" height="20.6" fill="#282828"/>
<rect x="987.3" y="667.7" width="22.8" height="20.6" fill="#191919"/>
<rect x="1009.5" y="667.7" width="22.8" height="20.6" fill="#323232"/>
<rect x="1031.7" y="667.7" width="22.8" height="20.6" fill="#323232"/>
<rect x="565.5" y="687.7" width="22.8" height="20.6" fill="#a5a5a5"/>
<rect x="587.7" y="687.7" width="22.8" height="20.6" fill="#a5a5a5"/>
<rect x="609.9" y="687.7" width="22.8" height="20.6" fill="#969696"/>
<rect x="632.1" y="687.7" width="22.8" height="20.6" fill="#555555"/>
<rect x="654.3" y="687.7" width="22.8" height="20.6" fill="#646464"/>
<rect x="676.5" y="687.7" width="22.8" height="20.6" fill="#737373"/>
<rect x="698.7" y="687.7" width="22.8" height="20.6" fill="#878787"/>
<rect x="720.9" y="687.7" width="22.8" height="20.6" fill="#787878"/>
<rect x="743.1" y="687.7" width="22.8" height="20.6" fill="#696969"/>
<rect x="765.3" y="687.7" width="22.8" height="20.6" fill="#696969"/>
<rect x="787.5" y="687.7" width="22.8" height="20.6" fill="#737373"/>
<rect x="809.7" y="687.7" width="22.8" height="20.6" fill="#828282"/>
<rect x="831.9" y="687.7" width="22.8" height="20.6" fill="#787878"/>
<rect x="854.1" y="687.7" width="22.8" height="20.6" fill="#6e6e6e"/>
<rect x="876.3" y="687.7" width="22.8" height="20.6" fill="#6c6c6c"/>
<rect x="898.5" y="687.7" width="22.8" height="20.6" fill="#767676"/>
<rect x="920.7" y="687.7" width="22.8" height="20.6" fill="#737373"/>
<rect x="942.9" y="687.7" width="22.8" height="20.6" fill="#7a7a7a"/>
<rect x="965.1" y="687.7" width="22.8" height="20.6" fill="#707070"/>
<rect x="987.3" y="687.7" width="22.8" height="20.6" fill="#6a6a6a"/>
<rect x="1009.5" y="687.7" width="22.8" height="20.6" fill="#666666"/>
<rect x="1031.7" y="687.7" width="22.8" height="20.6" fill="#666666"/>
<rect x="565.5" y="707.7" width="22.8" height="20.6" fill="#afafaf"/>
<rect x="587.7" y="707.7" width="22.8" height="20.6" fill="#afafaf"/>
<rect x="609.9" y="707.7" width="22.8" height="20.6" fill="#a5a5a5"/>
<rect x="632.1" y="707.7" width="22.8" height="20.6" fill="#646464"/>
<rect x="654.3" y="707.7" width="22.8" height="20.6" fill="#969696"/>
<rect x="676.5" y="707.7" width="22.8" height="20.6" fill="#878787"/>
<rect x="698.7" y="707.7" width="22.8" height="20.6" fill="#a5a5a5"/>
<rect x="720.9" y="707.7" width="22.8" height="20.6" fill="#8c8c8c"/>
<rect x="743.1" y="707.7" width="22.8" height="20.6" fill="#5f5f5f"/>
<rect x="765.3" y="707.7" width="22.8" height="20.6" fill="#969696"/>
<rect x="787.5" y="707.7" width="22.8" height="20.6" fill="#cdcdcd"/>
<rect x="809.7" y="707.7" width="22.8" height="20.6" fill="#e6e6e6"/>
<rect x="831.9" y="707.7" width="22.8" height="20.6" fill="#aaaaaa"/>
<rect x="854.1" y="707.7" width="22.8" height="20.6" fill="#8c8c8c"/>
<rect x="876.3" y="707.7" width="22.8" height="20.6" fill="#505050"/>
<rect x="898.5" y="707.7" width="22.8" height="20.6" fill="#787878"/>
<rect x="920.7" y="707.7" width="22.8" height="20.6" fill="#828282"/>
<rect x="942.9" y="707.7" width="22.8" height="20.6" fill="#8e8e8e"/>
<rect x="965.1" y="707.7" width="22.8" height="20.6" fill="#7e7e7e"/>
<rect x="987.3" y="707.7" width="22.8" height="20.6" fill="#707070"/>
<rect x="1009.5" y="707.7" width="22.8" height="20.6" fill="#6a6a6a"/>
<rect x="1031.7" y="707.7" width="22.8" height="20.6" fill="#6a6a6a"/>
<rect x="565.5" y="727.7" width="22.8" height="20.6" fill="#c8c8c8"/>
<rect x="587.7" y="727.7" width="22.8" height="20.6" fill="#c8c8c8"/>
<rect x="609.9" y="727.7" width="22.8" height="20.6" fill="#b9b9b9"/>
<rect x="632.1" y="727.7" width="22.8" height="20.6" fill="#969696"/>
<rect x="654.3" y="727.7" width="22.8" height="20.6" fill="#878787"/>
<rect x="676.5" y="727.7" width="22.8" height="20.6" fill="#878787"/>
<rect x="698.7" y="727.7" width="22.8" height="20.6" fill="#878787"/>
<rect x="720.9" y="727.7" width="22.8" height="20.6" fill="#878787"/>
<rect x="743.1" y="727.7" width="22.8" height="20.6" fill="#6e6e6e"/>
<rect x="765.3" y="727.7" width="22.8" height="20.6" fill="#c3c3c3"/>
<rect x="787.5" y="727.7" width="22.8" height="20.6" fill="#e1e1e1"/>
<rect x="809.7" y="727.7" width="22.8" height="20.6" fill="#d2d2d2"/>
<rect x="831.9" y="727.7" width="22.8" height="20.6" fill="#c8c8c8"/>
<rect x="854.1" y="727.7" width="22.8" height="20.6" fill="#646464"/>
<rect x="876.3" y="727.7" width="22.8" height="20.6" fill="#6e6e6e"/>
<rect x="898.5" y="727.7" width="22.8" height="20.6" fill="#787878"/>
<rect x="920.7" y="727.7" width="22.8" height="20.6" fill="#878787"/>
<rect x="942.9" y="727.7" width="22.8" height="20.6" fill="#afafaf"/>
<rect x="965.1" y="727.7" width="22.8" height="20.6" fill="#c8c8c8"/>
<rect x="987.3" y="727.7" width="22.8" height="20.6" fill="#b9b9b9"/>
<rect x="1009.5" y="727.7" width="22.8" height="20.6" fill="#8c8c8c"/>
<rect x="1031.7" y="727.7" width="22.8" height="20.6" fill="#8c8c8c"/>
<rect x="565.5" y="747.7" width="22.8" height="20.6" fill="#aaaaaa"/>
<rect x="587.7" y="747.7" width="22.8" height="20.6" fill="#aaaaaa"/>
<rect x="609.9" y="747.7" width="22.8" height="20.6" fill="#a0a0a0"/>
<rect x="632.1" y="747.7" width="22.8" height="20.6" fill="#646464"/>
<rect x="654.3" y="747.7" width="22.8" height="20.6" fill="#3c3c3c"/>
<rect x="676.5" y="747.7" width="22.8" height="20.6" fill="#6e6e6e"/>
<rect x="698.7" y="747.7" width="22.8" height="20.6" fill="#828282"/>
<rect x="720.9" y="747.7" width="22.8" height="20.6" fill="#ebebeb"/>
<rect x="743.1" y="747.7" width="22.8" height="20.6" fill="#a0a0a0"/>
<rect x="765.3" y="747.7" width="22.8" height="20.6" fill="#5f5f5f"/>
<rect x="787.5" y="747.7" width="22.8" height="20.6" fill="#828282"/>
<rect x="809.7" y="747.7" width="22.8" height="20.6" fill="#828282"/>
<rect x="831.9" y="747.7" width="22.8" height="20.6" fill="#b4b4b4"/>
<rect x="854.1" y="747.7" width="22.8" height="20.6" fill="#d2d2d2"/>
<rect x="876.3" y="747.7" width="22.8" height="20.6" fill="#969696"/>
<rect x="898.5" y="747.7" width="22.8" height="20.6" fill="#7d7d7d"/>
<rect x="920.7" y="747.7" width="22.8" height="20.6" fill="#696969"/>
<rect x="942.9" y="747.7" width="22.8" height="20.6" fill="#737373"/>
<rect x="965.1" y="747.7" width="22.8" height="20.6" fill="#969696"/>
<rect x="987.3" y="747.7" width="22.8" height="20.6" fill="#6e6e6e"/>
<rect x="1009.5" y="747.7" width="22.8" height="20.6" fill="#5f5f5f"/>
<rect x="1031.7" y="747.7" width="22.8" height="20.6" fill="#5f5f5f"/>
<rect x="565.5" y="767.7" width="22.8" height="20.6" fill="#c8c8c8"/>
<rect x="587.7" y="767.7" width="22.8" height="20.6" fill="#c8c8c8"/>
<rect x="609.9" y="767.7" width="22.8" height="20.6" fill="#b4b4b4"/>
<rect x="632.1" y="767.7" width="22.8" height="20.6" fill="#343434"/>
<rect x="654.3" y="767.7" width="22.8" height="20.6" fill="#505050"/>
<rect x="676.5" y="767.7" width="22.8" height="20.6" fill="#a0a0a0"/>
<rect x="698.7" y="767.7" width="22.8" height="20.6" fill="#878787"/>
<rect x="720.9" y="767.7" width="22.8" height="20.6" fill="#6e6e6e"/>
<rect x="743.1" y="767.7" width="22.8" height="20.6" fill="#bebebe"/>
<rect x="765.3" y="767.7" width="22.8" height="20.6" fill="#969696"/>
<rect x="787.5" y="767.7" width="22.8" height="20.6" fill="#8c8c8c"/>
<rect x="809.7" y="767.7" width="22.8" height="20.6" fill="#aaaaaa"/>
<rect x="831.9" y="767.7" width="22.8" height="20.6" fill="#a5a5a5"/>
<rect x="854.1" y="767.7" width="22.8" height="20.6" fill="#828282"/>
<rect x="876.3" y="767.7" width="22.8" height="20.6" fill="#bebebe"/>
<rect x="898.5" y="767.7" width="22.8" height="20.6" fill="#787878"/>
<rect x="920.7" y="767.7" width="22.8" height="20.6" fill="#505050"/>
<rect x="942.9" y="767.7" width="22.8" height="20.6" fill="#282828"/>
<rect x="965.1" y="767.7" width="22.8" height="20.6" fill="#4b4b4b"/>
<rect x="987.3" y="767.7" width="22.8" height="20.6" fill="#969696"/>
<rect x="1009.5" y="767.7" width="22.8" height="20.6" fill="#afafaf"/>
<rect x="1031.7" y="767.7" width="22.8" height="20.6" fill="#afafaf"/>
<rect x="565.5" y="787.7" width="22.8" height="20.6" fill="#d7d7d7"/>
<rect x="587.7" y="787.7" width="22.8" height="20.6" fill="#d7d7d7"/>
<rect x="609.9" y="787.7" width="22.8" height="20.6" fill="#bebebe"/>
<rect x="632.1" y="787.7" width="22.8" height="20.6" fill="#3e3e3e"/>
<rect x="654.3" y="787.7" width="22.8" height="20.6" fill="#585858"/>
<rect x="676.5" y="787.7" width="22.8" height="20.6" fill="#969696"/>
<rect x="698.7" y="787.7" width="22.8" height="20.6" fill="#323232"/>
<rect x="720.9" y="787.7" width="22.8" height="20.6" fill="#505050"/>
<rect x="743.1" y="787.7" width="22.8" height="20.6" fill="#b4b4b4"/>
<rect x="765.3" y="787.7" width="22.8" height="20.6" fill="#aaaaaa"/>
<rect x="787.5" y="787.7" width="22.8" height="20.6" fill="#9b9b9b"/>
<rect x="809.7" y="787.7" width="22.8" height="20.6" fill="#9b9b9b"/>
<rect x="831.9" y="787.7" width="22.8" height="20.6" fill="#bebebe"/>
<rect x="854.1" y="787.7" width="22.8" height="20.6" fill="#969696"/>
<rect x="876.3" y="787.7" width="22.8" height="20.6" fill="#5a5a5a"/>
<rect x="898.5" y="787.7" width="22.8" height="20.6" fill="#191919"/>
<rect x="920.7" y="787.7" width="22.8" height="20.6" fill="#555555"/>
<rect x="942.9" y="787.7" width="22.8" height="20.6" fill="#3c3c3c"/>
<rect x="965.1" y="787.7" width="22.8" height="20.6" fill="#8c8c8c"/>
<rect x="987.3" y="787.7" width="22.8" height="20.6" fill="#dcdcdc"/>
<rect x="1009.5" y="787.7" width="22.8" height="20.6" fill="#cdcdcd"/>
<rect x="1031.7" y="787.7" width="22.8" height="20.6" fill="#cdcdcd"/>
<rect x="565.5" y="807.7" width="22.8" height="20.6" fill="#969696"/>
<rect x="587.7" y="807.7" width="22.8" height="20.6" fill="#969696"/>
<rect x="609.9" y="807.7" width="22.8" height="20.6" fill="#b9b9b9"/>
<rect x="632.1" y="807.7" width="22.8" height="20.6" fill="#f0f0f0"/>
<rect x="654.3" y="807.7" width="22.8" height="20.6" fill="#fafafa"/>
<rect x="676.5" y="807.7" width="22.8" height="20.6" fill="#bebebe"/>
<rect x="698.7" y="807.7" width="22.8" height="20.6" fill="#afafaf"/>
<rect x="720.9" y="807.7" width="22.8" height="20.6" fill="#aaaaaa"/>
<rect x="743.1" y="807.7" width="22.8" height="20.6" fill="#b4b4b4"/>
<rect x="765.3" y="807.7" width="22.8" height="20.6" fill="#b9b9b9"/>
<rect x="787.5" y="807.7" width="22.8" height="20.6" fill="#464646"/>
<rect x="809.7" y="807.7" width="22.8" height="20.6" fill="#464646"/>
<rect x="831.9" y="807.7" width="22.8" height="20.6" fill="#b9b9b9"/>
<rect x="854.1" y="807.7" width="22.8" height="20.6" fill="#464646"/>
<rect x="876.3" y="807.7" width="22.8" height="20.6" fill="#5a5a5a"/>
<rect x="898.5" y="807.7" width="22.8" height="20.6" fill="#464646"/>
<rect x="920.7" y="807.7" width="22.8" height="20.6" fill="#d7d7d7"/>
<rect x="942.9" y="807.7" width="22.8" height="20.6" fill="#c8c8c8"/>
<rect x="965.1" y="807.7" width="22.8" height="20.6" fill="#dcdcdc"/>
<rect x="987.3" y="807.7" width="22.8" height="20.6" fill="#969696"/>
<rect x="1009.5" y="807.7" width="22.8" height="20.6" fill="#787878"/>
<rect x="1031.7" y="807.7" width="22.8" height="20.6" fill="#787878"/>
<rect x="565.5" y="827.7" width="22.8" height="20.6" fill="#bebebe"/>
<rect x="587.7" y="827.7" width="22.8" height="20.6" fill="#bebebe"/>
<rect x="609.9" y="827.7" width="22.8" height="20.6" fill="#cdcdcd"/>
<rect x="632.1" y="827.7" width="22.8" height="20.6" fill="#c8c8c8"/>
<rect x="654.3" y="827.7" width="22.8" height="20.6" fill="#d7d7d7"/>
<rect x="676.5" y="827.7" width="22.8" height="20.6" fill="#c8c8c8"/>
<rect x="698.7" y="827.7" width="22.8" height="20.6" fill="#969696"/>
<rect x="720.9" y="827.7" width="22.8" height="20.6" fill="#b9b9b9"/>
<rect x="743.1" y="827.7" width="22.8" height="20.6" fill="#a5a5a5"/>
<rect x="765.3" y="827.7" width="22.8" height="20.6" fill="#b9b9b9"/>
<rect x="787.5" y="827.7" width="22.8" height="20.6" fill="#3c3c3c"/>
<rect x="809.7" y="827.7" width="22.8" height="20.6" fill="#464646"/>
<rect x="831.9" y="827.7" width="22.8" height="20.6" fill="#c8c8c8"/>
<rect x="854.1" y="827.7" width="22.8" height="20.6" fill="#cdcdcd"/>
<rect x="876.3" y="827.7" width="22.8" height="20.6" fill="#dcdcdc"/>
<rect x="898.5" y="827.7" width="22.8" height="20.6" fill="#b9b9b9"/>
<rect x="920.7" y="827.7" width="22.8" height="20.6" fill="#b4b4b4"/>
<rect x="942.9" y="827.7" width="22.8" height="20.6" fill="#afafaf"/>
<rect x="965.1" y="827.7" width="22.8" height="20.6" fill="#aaaaaa"/>
<rect x="987.3" y="827.7" width="22.8" height="20.6" fill="#a0a0a0"/>
<rect x="1009.5" y="827.7" width="22.8" height="20.6" fill="#969696"/>
<rect x="1031.7" y="827.7" width="22.8" height="20.6" fill="#969696"/>
<rect x="565.5" y="847.7" width="22.8" height="20.6" fill="#aaaaaa"/>
<rect x="587.7" y="847.7" width="22.8" height="20.6" fill="#aaaaaa"/>
<rect x="609.9" y="847.7" width="22.8" height="20.6" fill="#787878"/>
<rect x="632.1" y="847.7" width="22.8" height="20.6" fill="#6e6e6e"/>
<rect x="654.3" y="847.7" width="22.8" height="20.6" fill="#a0a0a0"/>
<rect x="676.5" y="847.7" width="22.8" height="20.6" fill="#969696"/>
<rect x="698.7" y="847.7" width="22.8" height="20.6" fill="#878787"/>
<rect x="720.9" y="847.7" width="22.8" height="20.6" fill="#919191"/>
<rect x="743.1" y="847.7" width="22.8" height="20.6" fill="#969696"/>
<rect x="765.3" y="847.7" width="22.8" height="20.6" fill="#737373"/>
<rect x="787.5" y="847.7" width="22.8" height="20.6" fill="#323232"/>
<rect x="809.7" y="847.7" width="22.8" height="20.6" fill="#323232"/>
<rect x="831.9" y="847.7" width="22.8" height="20.6" fill="#969696"/>
<rect x="854.1" y="847.7" width="22.8" height="20.6" fill="#878787"/>
<rect x="876.3" y="847.7" width="22.8" height="20.6" fill="#8c8c8c"/>
<rect x="898.5" y="847.7" width="22.8" height="20.6" fill="#969696"/>
<rect x="920.7" y="847.7" width="22.8" height="20.6" fill="#7d7d7d"/>
<rect x="942.9" y="847.7" width="22.8" height="20.6" fill="#7d7d7d"/>
<rect x="965.1" y="847.7" width="22.8" height="20.6" fill="#878787"/>
<rect x="987.3" y="847.7" width="22.8" height="20.6" fill="#969696"/>
<rect x="1009.5" y="847.7" width="22.8" height="20.6" fill="#a5a5a5"/>
<rect x="1031.7" y="847.7" width="22.8" height="20.6" fill="#a5a5a5"/>
<rect x="565.5" y="867.7" width="22.8" height="20.6" fill="#c3c3c3"/>
<rect x="587.7" y="867.7" width="22.8" height="20.6" fill="#c3c3c3"/>
<rect x="609.9" y="867.7" width="22.8" height="20.6" fill="#969696"/>
<rect x="632.1" y="867.7" width="22.8" height="20.6" fill="#878787"/>
<rect x="654.3" y="867.7" width="22.8" height="20.6" fill="#a5a5a5"/>
<rect x="676.5" y="867.7" width="22.8" height="20.6" fill="#a0a0a0"/>
<rect x="698.7" y="867.7" width="22.8" height="20.6" fill="#737373"/>
<rect x="720.9" y="867.7" width="22.8" height="20.6" fill="#828282"/>
<rect x="743.1" y="867.7" width="22.8" height="20.6" fill="#787878"/>
<rect x="765.3" y="867.7" width="22.8" height="20.6" fill="#5f5f5f"/>
<rect x="787.5" y="867.7" width="22.8" height="20.6" fill="#2d2d2d"/>
<rect x="809.7" y="867.7" width="22.8" height="20.6" fill="#373737"/>
<rect x="831.9" y="867.7" width="22.8" height="20.6" fill="#464646"/>
<rect x="854.1" y="867.7" width="22.8" height="20.6" fill="#555555"/>
<rect x="876.3" y="867.7" width="22.8" height="20.6" fill="#878787"/>
<rect x="898.5" y="867.7" width="22.8" height="20.6" fill="#919191"/>
<rect x="920.7" y="867.7" width="22.8" height="20.6" fill="#828282"/>
<rect x="942.9" y="867.7" width="22.8" height="20.6" fill="#6e6e6e"/>
<rect x="965.1" y="867.7" width="22.8" height="20.6" fill="#969696"/>
<rect x="987.3" y="867.7" width="22.8" height="20.6" fill="#a5a5a5"/>
<rect x="1009.5" y="867.7" width="22.8" height="20.6" fill="#aaaaaa"/>
<rect x="1031.7" y="867.7" width="22.8" height="20.6" fill="#aaaaaa"/>
<rect x="565.5" y="887.7" width="22.8" height="20.6" fill="#cdcdcd"/>
<rect x="587.7" y="887.7" width="22.8" height="20.6" fill="#cdcdcd"/>
<rect x="609.9" y="887.7" width="22.8" height="20.6" fill="#c8c8c8"/>
<rect x="632.1" y="887.7" width="22.8" height="20.6" fill="#d7d7d7"/>
<rect x="654.3" y="887.7" width="22.8" height="20.6" fill="#dcdcdc"/>
<rect x="676.5" y="887.7" width="22.8" height="20.6" fill="#c8c8c8"/>
<rect x="698.7" y="887.7" width="22.8" height="20.6" fill="#a0a0a0"/>
<rect x="720.9" y="887.7" width="22.8" height="20.6" fill="#5a5a5a"/>
<rect x="743.1" y="887.7" width="22.8" height="20.6" fill="#464646"/>
<rect x="765.3" y="887.7" width="22.8" height="20.6" fill="#646464"/>
<rect x="787.5" y="887.7" width="22.8" height="20.6" fill="#5a5a5a"/>
<rect x="809.7" y="887.7" width="22.8" height="20.6" fill="#555555"/>
<rect x="831.9" y="887.7" width="22.8" height="20.6" fill="#5f5f5f"/>
<rect x="854.1" y="887.7" width="22.8" height="20.6" fill="#646464"/>
<rect x="876.3" y="887.7" width="22.8" height="20.6" fill="#787878"/>
<rect x="898.5" y="887.7" width="22.8" height="20.6" fill="#b9b9b9"/>
<rect x="920.7" y="887.7" width="22.8" height="20.6" fill="#cdcdcd"/>
<rect x="942.9" y="887.7" width="22.8" height="20.6" fill="#c8c8c8"/>
<rect x="965.1" y="887.7" width="22.8" height="20.6" fill="#b9b9b9"/>
<rect x="987.3" y="887.7" width="22.8" height="20.6" fill="#afafaf"/>
<rect x="1009.5" y="887.7" width="22.8" height="20.6" fill="#afafaf"/>
<rect x="1031.7" y="887.7" width="22.8" height="20.6" fill="#afafaf"/>
<rect x="565.5" y="907.7" width="22.8" height="20.6" fill="#cdcdcd"/>
<rect x="587.7" y="907.7" width="22.8" height="20.6" fill="#cdcdcd"/>
<rect x="609.9" y="907.7" width="22.8" height="20.6" fill="#c8c8c8"/>
<rect x="632.1" y="907.7" width="22.8" height="20.6" fill="#d7d7d7"/>
<rect x="654.3" y="907.7" width="22.8" height="20.6" fill="#dcdcdc"/>
<rect x="676.5" y="907.7" width="22.8" height="20.6" fill="#c8c8c8"/>
<rect x="698.7" y="907.7" width="22.8" height="20.6" fill="#a0a0a0"/>
<rect x="720.9" y="907.7" width="22.8" height="20.6" fill="#5a5a5a"/>
<rect x="743.1" y="907.7" width="22.8" height="20.6" fill="#464646"/>
<rect x="765.3" y="907.7" width="22.8" height="20.6" fill="#646464"/>
<rect x="787.5" y="907.7" width="22.8" height="20.6" fill="#5a5a5a"/>
<rect x="809.7" y="907.7" width="22.8" height="20.6" fill="#555555"/>
<rect x="831.9" y="907.7" width="22.8" height="20.6" fill="#5f5f5f"/>
<rect x="854.1" y="907.7" width="22.8" height="20.6" fill="#646464"/>
<rect x="876.3" y="907.7" width="22.8" height="20.6" fill="#787878"/>
<rect x="898.5" y="907.7" width="22.8" height="20.6" fill="#b9b9b9"/>
<rect x="920.7" y="907.7" width="22.8" height="20.6" fill="#cdcdcd"/>
<rect x="942.9" y="907.7" width="22.8" height="20.6" fill="#c8c8c8"/>
<rect x="965.1" y="907.7" width="22.8" height="20.6" fill="#b9b9b9"/>
<rect x="987.3" y="907.7" width="22.8" height="20.6" fill="#afafaf"/>
<rect x="1009.5" y="907.7" width="22.8" height="20.6" fill="#afafaf"/>
<rect x="1031.7" y="907.7" width="22.8" height="20.6" fill="#afafaf"/>
</g>
<polygon points="662.0,645.6 662.0,679.8 671.8,680.2 685.7,680.5 706.7,674.9 727.6,670.0 748.6,666.5 783.5,664.4 786.3,654.0 794.6,648.4 794.6,645.6" fill="#000000" filter="url(#xb1)" opacity="1.00"/>
<polygon points="835.1,645.6 836.5,659.5 865.9,661.2 893.8,666.5 914.7,671.8 927.3,672.4 932.9,668.6 937.8,658.2 941.2,645.6" fill="#000000" filter="url(#xb2)" opacity="1.00"/>
<polygon points="588.0,640.0 1031.0,640.0 1031.0,650.5 588.0,650.5" fill="#000000" filter="url(#xb0)" opacity="1.00"/>
<ellipse cx="639.0" cy="669.7" rx="20.2" ry="10.8" fill="#121212" filter="url(#xb3)" opacity="1.00"/>
<polyline points="661.6,651.2 661.6,679.1" fill="none" stroke="#5a5a5a" stroke-width="1.0" stroke-linecap="round" stroke-linejoin="round" filter="url(#xb1)" opacity="0.80"/>
<ellipse cx="998.5" cy="677.7" rx="20.9" ry="11.2" fill="#080808" filter="url(#xb3)" opacity="1.00"/>
<ellipse cx="801.7" cy="728.9" rx="39.5" ry="23.3" fill="#d7d7d7" filter="url(#xb4)" opacity="0.90"/>
<ellipse cx="767.6" cy="740.2" rx="6.6" ry="6.0" fill="#d7d7d7" filter="url(#xb2)" opacity="1.00"/>
<ellipse cx="780.1" cy="739.6" rx="7.2" ry="10.2" fill="#d7d7d7" filter="url(#xb2)" opacity="1.00"/>
<ellipse cx="793.3" cy="739.0" rx="7.2" ry="13.2" fill="#d2d2d2" filter="url(#xb2)" opacity="1.00"/>
<ellipse cx="805.9" cy="743.5" rx="6.0" ry="17.6" fill="#ebebeb" filter="url(#xb2)" opacity="1.00"/>
<ellipse cx="822.0" cy="736.7" rx="9.6" ry="13.2" fill="#d4d4d4" filter="url(#xb3)" opacity="1.00"/>
<ellipse cx="835.2" cy="736.7" rx="6.0" ry="10.8" fill="#c8c8c8" filter="url(#xb3)" opacity="1.00"/>
<polygon points="759.8,749.8 783.7,752.2 800.5,757.0 812.4,757.0 831.6,752.2 849.5,742.6 867.5,737.8 867.5,742.6 843.5,757.0 831.6,761.8 783.7,764.2 759.8,757.0" fill="#555555" filter="url(#xb3)" opacity="0.80"/>
<polygon points="837.6,730.1 843.5,722.9 861.5,720.5 872.2,715.1 880.6,719.9 881.2,725.9 865.1,730.1 861.5,734.5 847.1,740.0 838.8,736.9" fill="#ffffff" filter="url(#xb1)" opacity="1.00"/>
<path d="M 719.1 757.0 Q 719.1 748.4 726.9 748.4 Q 734.7 748.9 735.5 756.7 Q 741.3 755.2 747.8 759.1 Q 753.8 758.2 758.9 762.7 Q 767.6 761.8 770.8 770.1 Q 771.3 777.6 764.6 777.6 Q 759.8 776.4 757.4 772.8 Q 751.4 774.0 747.2 771.6 Q 740.7 771.6 735.9 768.0 Q 731.1 769.8 723.9 768.0 Q 719.1 764.4 719.1 757.0 Z" fill="#ffffff" filter="url(#xb1)" opacity="1.00"/>
<ellipse cx="776.8" cy="769.7" rx="2.4" ry="3.1" fill="#d7d7d7" filter="url(#xb1)" opacity="1.00"/>
<path d="M 792.1 767.8 Q 793.3 763.6 799.3 763.8 Q 804.1 764.2 805.9 766.6 Q 807.7 762.4 813.0 762.6 Q 818.4 763.0 820.2 766.6 Q 822.0 763.6 826.8 763.8 Q 831.6 764.2 832.8 766.6 Q 834.0 760.3 838.8 760.3 Q 843.5 761.8 844.0 770.1 Q 843.5 778.8 838.8 779.4 Q 835.2 778.8 833.4 776.1 L 826.8 782.9 L 820.8 776.4 L 813.0 782.9 L 805.9 775.8 L 798.3 782.9 L 792.7 776.4 Z" fill="#ffffff" filter="url(#xb1)" opacity="1.00"/>
<polygon points="844.7,759.6 884.2,743.6 890.4,760.6 875.8,765.6 873.4,761.8 862.7,762.7 861.5,768.0 854.3,771.6 848.9,766.6" fill="#ffffff" filter="url(#xb1)" opacity="1.00"/>
<polygon points="862.9,763.0 874.4,762.5 874.9,768.3 863.3,769.2" fill="#0a0a0a" filter="url(#xb1)" opacity="1.00"/>
<ellipse cx="779.5" cy="777.3" rx="2.0" ry="6.6" fill="#0f0f0f" filter="url(#xb1)" opacity="1.00"/>
<ellipse cx="790.9" cy="776.1" rx="1.4" ry="5.4" fill="#0f0f0f" filter="url(#xb1)" opacity="1.00"/>
<ellipse cx="805.3" cy="779.1" rx="1.4" ry="4.8" fill="#0f0f0f" filter="url(#xb1)" opacity="1.00"/>
<ellipse cx="820.8" cy="780.1" rx="1.4" ry="3.8" fill="#0f0f0f" filter="url(#xb1)" opacity="1.00"/>
<ellipse cx="832.2" cy="780.1" rx="1.4" ry="3.8" fill="#0f0f0f" filter="url(#xb1)" opacity="1.00"/>
<polygon points="732.1,769.9 744.5,769.5 745.2,773.7 739.5,773.1 732.5,774.3" fill="#191919" filter="url(#xb1)" opacity="1.00"/>
<polyline points="751.7,773.7 750.2,785.7" fill="none" stroke="#ebebeb" stroke-width="2.0" stroke-linecap="round" stroke-linejoin="round" filter="url(#xb1)" opacity="1.00"/>
<polyline points="762.4,777.9 759.8,786.3" fill="none" stroke="#f5f5f5" stroke-width="2.2" stroke-linecap="round" stroke-linejoin="round" filter="url(#xb1)" opacity="1.00"/>
<polyline points="797.8,782.1 797.5,802.4" fill="none" stroke="#d7d7d7" stroke-width="1.2" stroke-linecap="round" stroke-linejoin="round" filter="url(#xb1)" opacity="0.80"/>
<polyline points="813.6,782.1 816.6,797.7" fill="none" stroke="#cdcdcd" stroke-width="1.2" stroke-linecap="round" stroke-linejoin="round" filter="url(#xb1)" opacity="0.70"/>
<polyline points="847.1,771.3 854.3,789.3" fill="none" stroke="#c8c8c8" stroke-width="1.5" stroke-linecap="round" stroke-linejoin="round" filter="url(#xb1)" opacity="0.70"/>
<polyline points="859.1,772.5 865.1,785.7" fill="none" stroke="#c3c3c3" stroke-width="1.5" stroke-linecap="round" stroke-linejoin="round" filter="url(#xb1)" opacity="0.70"/>
<polyline points="717.9,767.8 713.2,784.5" fill="none" stroke="#c8c8c8" stroke-width="3.0" stroke-linecap="round" stroke-linejoin="round" filter="url(#xb2)" opacity="0.60"/>
<polyline points="725.1,768.9 721.5,783.3" fill="none" stroke="#c8c8c8" stroke-width="3.0" stroke-linecap="round" stroke-linejoin="round" filter="url(#xb2)" opacity="0.60"/>
<path d="M 702.5 792.5 Q 713.7 788.3 729.0 794.5 Q 748.6 801.5 768.8 811.0 Q 741.6 809.9 720.6 806.8 Q 706.7 803.6 702.5 792.5 Z" fill="#000000" filter="url(#xb1)" opacity="1.00"/>
<ellipse cx="719.2" cy="798.7" rx="19.5" ry="9.8" fill="#1e1e1e" filter="url(#xb3)" opacity="0.45"/>
<path d="M739.5 798.3 Q783.7 809.6 831.6 800.0 T896.2 785.7" fill="none" stroke="#e1e1e1" stroke-width="5.0" stroke-linecap="round" filter="url(#xb3)" opacity="0.80"/>
<polygon points="896.2,790.5 927.3,787.5 927.3,810.8 879.4,810.8 886.6,800.0" fill="#141414" filter="url(#xb3)" opacity="0.80"/>
<path d="M 783.5 813.4 Q 793.2 809.9 800.2 816.9 Q 803.0 830.9 800.9 847.6 Q 800.2 858.8 796.0 860.2 Q 789.1 853.2 787.7 837.8 Q 782.1 823.9 783.5 813.4 Z" fill="#000000" filter="url(#xb1)" opacity="1.00"/>
<path d="M 828.2 821.1 Q 818.4 822.5 812.8 836.4 Q 810.0 847.6 814.2 857.4 Q 819.8 860.2 823.3 853.2 Q 821.2 840.6 826.8 833.6 Q 830.9 825.3 828.2 821.1 Z" fill="#000000" filter="url(#xb1)" opacity="1.00"/>
<path d="M 784.9 850.4 Q 790.5 872.7 805.8 892.3" fill="none" stroke="#000000" stroke-width="11.0" stroke-linecap="round" filter="url(#xb3)" opacity="1.00"/>
<ellipse cx="823.3" cy="815.5" rx="11.9" ry="5.6" fill="#3c3c3c" filter="url(#xb3)" opacity="0.80"/>
<ellipse cx="793.2" cy="812.7" rx="12.6" ry="4.2" fill="#3c3c3c" filter="url(#xb3)" opacity="0.80"/>
<ellipse cx="952.1" cy="786.2" rx="13.6" ry="8.4" fill="#000000" filter="url(#xb2)" opacity="1.00"/>
<path d="M 882.6 800.1 Q 888.2 790.4 902.2 787.6 Q 918.9 789.0 925.9 805.7 Q 918.9 816.9 902.2 816.2 Q 891.0 812.7 885.4 808.5 Q 881.2 805.7 882.6 800.1 Z" fill="#030303" filter="url(#xb2)" opacity="1.00"/>
<ellipse cx="865.2" cy="807.8" rx="9.1" ry="7.7" fill="#2d2d2d" filter="url(#xb3)" opacity="0.80"/>
<ellipse cx="881.2" cy="800.8" rx="12.6" ry="10.5" fill="#464646" filter="url(#xb4)" opacity="0.60"/>
<path d="M 1032.0 787.6 Q 984.5 797.3 970.6 812.7 Q 949.6 823.9 928.7 825.3" fill="none" stroke="#f0f0f0" stroke-width="7.0" stroke-linecap="round" filter="url(#xb3)" opacity="0.85"/>
<path d="M 972.0 811.3 Q 960.8 828.1 960.8 839.2" fill="none" stroke="#ebebeb" stroke-width="2.0" stroke-linecap="round" filter="url(#xb1)" opacity="0.80"/>
<ellipse cx="663.4" cy="823.9" rx="25.1" ry="11.2" fill="#ffffff" filter="url(#xb4)" opacity="0.90"/>
<path d="M 588.0 800.1 Q 622.9 809.9 648.0 830.9 Q 660.6 847.6 657.8 872.7 Q 653.6 886.7 646.6 895.1" fill="none" stroke="#ebebeb" stroke-width="2.0" stroke-linecap="round" filter="url(#xb1)" opacity="0.70"/>
<path d="M 708.1 808.5 Q 696.9 821.1 685.7 858.8 Q 677.4 881.1 677.4 900.7" fill="none" stroke="#e1e1e1" stroke-width="2.0" stroke-linecap="round" filter="url(#xb1)" opacity="0.60"/>
<path d="M 694.1 847.6 Q 727.6 858.8 755.6 881.1" fill="none" stroke="#d7d7d7" stroke-width="2.0" stroke-linecap="round" filter="url(#xb1)" opacity="0.60"/>
<path d="M 891.0 904.9 Q 921.7 892.3 963.6 885.3 Q 984.5 882.5 1019.4 883.9" fill="none" stroke="#e6e6e6" stroke-width="3.0" stroke-linecap="round" filter="url(#xb2)" opacity="0.70"/>
<path d="M 949.6 904.9 Q 960.8 893.7 967.8 882.5" fill="none" stroke="#ebebeb" stroke-width="2.0" stroke-linecap="round" filter="url(#xb1)" opacity="0.70"/>
<path d="M 713.7 708.4 Q 691.3 726.6 678.8 750.3" fill="none" stroke="#cdcdcd" stroke-width="2.5" stroke-linecap="round" filter="url(#xb1)" opacity="0.70"/>
<path d="M 899.4 705.6 Q 921.7 718.2 932.9 746.1" fill="none" stroke="#c8c8c8" stroke-width="2.5" stroke-linecap="round" filter="url(#xb1)" opacity="0.60"/>
<polyline points="849.1,693.8 1032.0,693.8" fill="none" stroke="#aaaaaa" stroke-width="0.8" stroke-linecap="round" stroke-linejoin="round" filter="url(#xb0)" opacity="0.30"/>
<polyline points="865.9,707.0 1032.0,707.0" fill="none" stroke="#bebebe" stroke-width="0.8" stroke-linecap="round" stroke-linejoin="round" filter="url(#xb0)" opacity="0.35"/>
<polygon points="618.0,656.5 661.3,656.5 661.3,680.8 635.5,681.9 625.0,672.1" fill="#0c0c0c" filter="url(#xb2)" opacity="1.00"/>
<polygon points="585.2,651.2 660.6,651.2 660.6,656.5 585.2,656.5" fill="#505050" filter="url(#xb2)" opacity="0.80"/>
<ellipse cx="601.3" cy="684.0" rx="21.6" ry="23.0" fill="#aaaaaa" filter="url(#xb4)" opacity="0.80"/>
<polygon points="634.1,681.9 649.4,686.1 643.9,712.6 629.9,718.2 627.1,698.6" fill="#282828" filter="url(#xb3)" opacity="0.85"/>
<polygon points="650.8,681.9 666.2,680.5 673.2,698.6 635.5,779.6 607.5,779.6 642.5,723.8" fill="#969696" filter="url(#xb3)" opacity="0.60"/>
<ellipse cx="657.8" cy="763.6" rx="15.4" ry="10.5" fill="#232323" filter="url(#xb3)" opacity="0.85"/>
<ellipse cx="673.2" cy="688.2" rx="9.8" ry="10.5" fill="#282828" filter="url(#xb3)" opacity="0.70"/>
<polyline points="591.1,670.3 596.0,670.3 596.0,681.6" fill="none" stroke="#ffffff" stroke-width="0.9" stroke-linecap="round" stroke-linejoin="round" filter="url(#xb0)" opacity="1.00"/>
<text x="588" y="661.5" font-family="'Liberation Sans',sans-serif" font-size="7" fill="#fff">nouh@</text>
<polyline points="794.6,648.7 810.0,648.7" fill="none" stroke="#e6e6e6" stroke-width="0.8" stroke-linecap="round" stroke-linejoin="round" filter="url(#xb0)" opacity="0.90"/>
<polyline points="810.0,648.7 837.9,648.7" fill="none" stroke="#e6e6e6" stroke-width="0.8" stroke-linecap="round" stroke-linejoin="round" filter="url(#xb0)" opacity="0.90"/>
<ellipse cx="805.8" cy="658.2" rx="16.8" ry="7.7" fill="#2d2d2d" filter="url(#xb3)" opacity="0.90"/>
<polygon points="882.6,711.2 899.4,709.8 916.1,718.2 925.9,737.7 921.7,751.7 907.7,754.5 893.8,751.7 888.2,737.7" fill="#555555" filter="url(#xb3)" opacity="0.80"/>
<polyline points="773.9,725.9 774.6,746.2" fill="none" stroke="#969696" stroke-width="1.4" stroke-linecap="round" stroke-linejoin="round" filter="url(#xb1)" opacity="0.55"/>
<polyline points="786.4,721.1 787.1,749.8" fill="none" stroke="#969696" stroke-width="1.4" stroke-linecap="round" stroke-linejoin="round" filter="url(#xb1)" opacity="0.55"/>
<polyline points="800.0,719.9 800.7,752.2" fill="none" stroke="#969696" stroke-width="1.4" stroke-linecap="round" stroke-linejoin="round" filter="url(#xb1)" opacity="0.55"/>
<polyline points="812.7,719.9 813.4,754.6" fill="none" stroke="#969696" stroke-width="1.4" stroke-linecap="round" stroke-linejoin="round" filter="url(#xb1)" opacity="0.55"/>
<polyline points="829.8,723.5 830.5,746.2" fill="none" stroke="#969696" stroke-width="1.4" stroke-linecap="round" stroke-linejoin="round" filter="url(#xb1)" opacity="0.55"/>
<polyline points="767.0,729.5 767.5,745.0" fill="none" stroke="#f5f5f5" stroke-width="3.5" stroke-linecap="round" stroke-linejoin="round" filter="url(#xb2)" opacity="0.35"/>
<polyline points="779.9,729.5 780.4,745.0" fill="none" stroke="#f5f5f5" stroke-width="3.5" stroke-linecap="round" stroke-linejoin="round" filter="url(#xb2)" opacity="0.35"/>
<polyline points="792.8,729.5 793.3,745.0" fill="none" stroke="#f5f5f5" stroke-width="3.5" stroke-linecap="round" stroke-linejoin="round" filter="url(#xb2)" opacity="0.35"/>
<polyline points="820.8,729.5 821.3,745.0" fill="none" stroke="#f5f5f5" stroke-width="3.5" stroke-linecap="round" stroke-linejoin="round" filter="url(#xb2)" opacity="0.35"/>
<polyline points="835.8,729.5 836.2,745.0" fill="none" stroke="#f5f5f5" stroke-width="3.5" stroke-linecap="round" stroke-linejoin="round" filter="url(#xb2)" opacity="0.35"/>
<path d="M 927.3 674.2 Q 939.9 668.6 955.2 674.9 Q 966.4 686.1 969.2 705.6 L 930.1 705.6 Q 925.9 688.9 927.3 674.2 Z" fill="#808080" filter="url(#xb3)" opacity="0.70"/>
</g>
</svg>
<!-- text overlay -->
<div class="a" style="left:27.9px;top:4px;line-height:19px;letter-spacing:-0.46px;font-size:15px;color:#9b9b9b;">3D Slicer 4.10.1</div>
<div class="a" style="left:11.1px;top:31px;line-height:16px;letter-spacing:-0.22px;"><u>F</u>ile</div>
<div class="a" style="left:46.2px;top:31px;line-height:16px;letter-spacing:-0.28px;"><u>E</u>dit</div>
<div class="a" style="left:82.6px;top:31px;line-height:16px;letter-spacing:-0.02px;"><u>V</u>iew</div>
<div class="a" style="left:124.6px;top:31px;line-height:16px;letter-spacing:-0.12px;"><u>H</u>elp</div>
<div class="a" style="left:149.9px;top:65px;line-height:16px;letter-spacing:-0.02px;">Modules:</div>
<div class="a" style="left:264.2px;top:64px;line-height:16px;letter-spacing:-0.33px;">RawImageGuess</div>
<div class="a" style="left:25.0px;top:191px;line-height:16px;letter-spacing:-0.06px;">Help &amp; Acknowledgement</div>
<div class="a" style="left:25.0px;top:230px;line-height:16px;letter-spacing:0.07px;">Reload &amp; Test</div>
<div class="a" style="left:79.1px;top:256px;line-height:16px;letter-spacing:-0.21px;">Reload</div>
<div class="a" style="left:244.1px;top:256px;line-height:16px;letter-spacing:-0.02px;">Reload and Test</div>
<div class="a" style="left:443.8px;top:256px;line-height:16px;letter-spacing:-0.02px;">Restart Slicer</div>
<div class="a" style="left:136.0px;top:280px;line-height:16px;letter-spacing:-0.15px;">Edit</div>
<div class="a" style="left:415.9px;top:280px;line-height:16px;letter-spacing:0.09px;">Edit UI</div>
<div class="a" style="left:6.1px;top:315px;line-height:16px;letter-spacing:0.10px;">Output Volume:</div>
<div class="a" style="left:104.9px;top:315px;line-height:16px;letter-spacing:-0.06px;">Volume</div>
<div class="a" style="left:5.6px;top:342px;line-height:16px;letter-spacing:0.37px;">Input file:</div>
<div class="a" style="left:100.3px;top:342px;line-height:16px;letter-spacing:-0.34px;">an_8ED5113108-7C2104-4DE204-86021102-920231027B02AE02E802B702</div>
<div class="a" style="left:555.2px;top:342px;line-height:16px;letter-spacing:0.74px;font-weight:bold;">...</div>
<div class="a" style="left:5.7px;top:369px;line-height:16px;letter-spacing:-0.14px;">Endianness:</div>
<div class="a" style="left:104.0px;top:369px;line-height:16px;letter-spacing:-0.17px;">Big endian</div>
<div class="a" style="left:5.7px;top:397px;line-height:16px;letter-spacing:0.02px;">Header size:</div>
<div class="a" style="left:519.9px;top:397px;line-height:16px;letter-spacing:-0.20px;">10</div>
<div class="a" style="left:6.3px;top:425px;line-height:16px;letter-spacing:0.04px;">X dimension:</div>
<div class="a" style="left:520.3px;top:425px;line-height:16px;letter-spacing:-0.25px;">2609</div>
<div class="a" style="left:6.5px;top:453px;line-height:16px;letter-spacing:-0.05px;">Y dimension:</div>
<div class="a" style="left:519.9px;top:453px;line-height:16px;letter-spacing:-0.12px;">1526</div>
<div class="a" style="left:6.3px;top:481px;line-height:16px;letter-spacing:-0.01px;">Z dimension:</div>
<div class="a" style="left:520.1px;top:481px;line-height:16px;letter-spacing:0.00px;">1</div>
<div class="a" style="left:5.7px;top:508px;line-height:16px;letter-spacing:-0.01px;">Pixel type:</div>
<div class="a" style="left:104.4px;top:508px;line-height:16px;letter-spacing:-0.06px;">16 bit unsigned</div>
<div class="a" style="left:269.6px;top:534px;line-height:16px;letter-spacing:-0.26px;">Update</div>
<div class="a" style="left:5.7px;top:556px;line-height:16px;letter-spacing:0.20px;">Header:</div>
<div class="a" style="left:24.4px;top:858px;line-height:16px;letter-spacing:-0.14px;">Data Probe</div>
<div class="a" style="left:32.9px;top:893px;line-height:16px;letter-spacing:-0.10px;">Show Zoomed Slice</div>
<div class="a" style="left:15.8px;top:924px;line-height:16px;letter-spacing:0.00px;">L</div>
<div class="a" style="left:15.8px;top:943px;line-height:16px;letter-spacing:0.00px;">F</div>
<div class="a" style="left:15.8px;top:962px;line-height:16px;letter-spacing:0.00px;">B</div>
<div class="a" style="left:609.4px;top:548px;line-height:16px;letter-spacing:0.00px;">R</div>
<div class="a" style="left:931.5px;top:548px;line-height:16px;letter-spacing:0.17px;">S: 0.000mm</div>
<div class="a" style="left:1053.1px;top:548px;line-height:16px;letter-spacing:0.00px;">Y</div>
<div class="a" style="left:1380.9px;top:548px;line-height:16px;letter-spacing:0.16px;">R: 0.000mm</div>
<div class="a" style="left:1498.8px;top:548px;line-height:16px;letter-spacing:0.00px;">G</div>
<div class="a" style="left:609.1px;top:95px;line-height:16px;letter-spacing:0.00px;">1</div>
<div class="a" style="left:1248.1px;top:124px;line-height:32px;letter-spacing:0.00px;font-size:25.5px;color:#fff;transform:scaleX(0.88);transform-origin:0 0;">S</div>
<div class="a" style="left:1062.2px;top:309px;line-height:32px;letter-spacing:0.00px;font-size:25.5px;color:#fff;">R</div>
<div class="a" style="left:1432.1px;top:309px;line-height:32px;letter-spacing:0.00px;font-size:25.5px;color:#fff;">L</div>
<div class="a" style="left:1248.8px;top:313px;line-height:24px;letter-spacing:0.00px;font-size:19.6px;color:#fff;">P</div>
<div class="a" style="left:1247.8px;top:494px;line-height:32px;letter-spacing:0.00px;font-size:25.5px;color:#fff;">I</div>
<div class="a" style="left:592.7px;top:955px;line-height:19px;letter-spacing:-0.02px;font-size:15px;color:#fff;font-family:'Liberation Serif',serif;">B: Volume</div>
</body>
</html>
